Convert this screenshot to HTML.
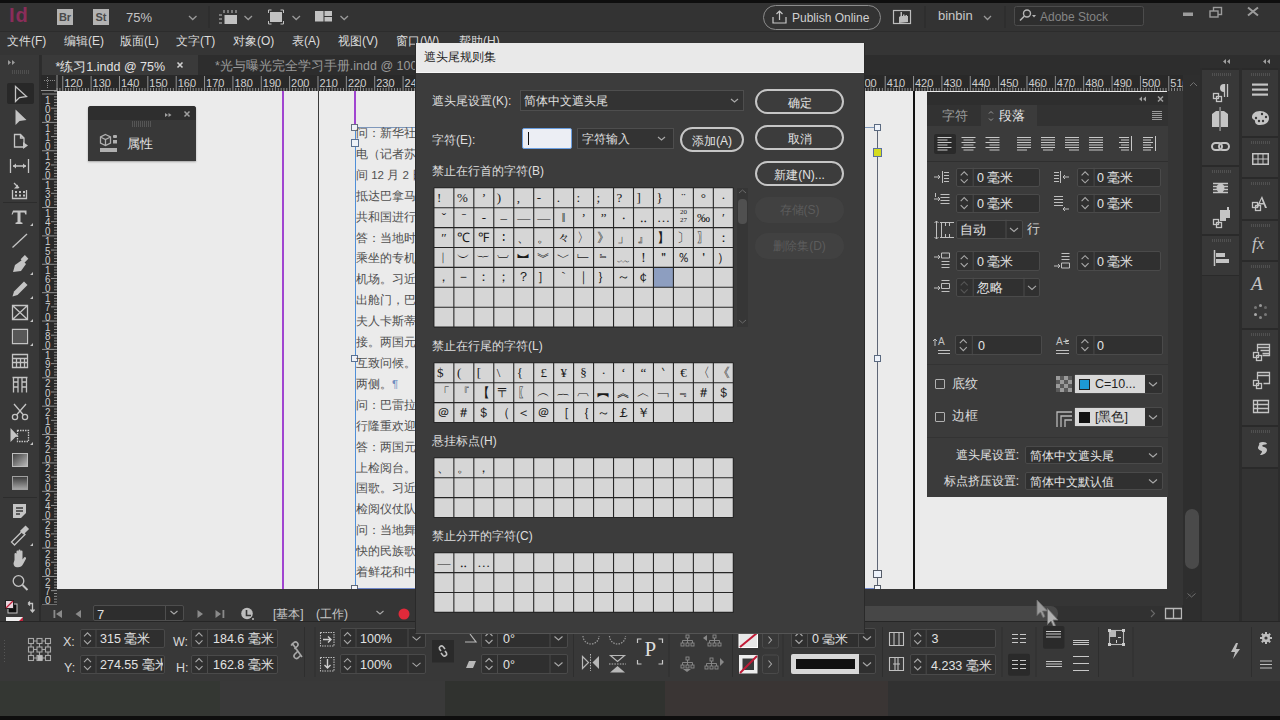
<!DOCTYPE html>
<html><head><meta charset="utf-8">
<style>
*{box-sizing:border-box;margin:0;padding:0}
body{text-spacing-trim:space-all;width:1280px;height:720px;overflow:hidden;position:relative;background:#363636;font-family:"Liberation Sans",sans-serif;font-size:12px;color:#d6d6d6}
.a{position:absolute}
.t{position:absolute;white-space:nowrap;line-height:1}
svg{position:absolute;overflow:visible}
</style></head><body>

<!-- top strip -->
<div class="a" style="left:0;top:0;width:1280px;height:3px;background:#0e0e0e"></div>
<!-- app bar -->
<div class="a" style="left:0;top:3px;width:1280px;height:28px;background:#333333"></div>
<!-- menu bar -->
<div class="a" style="left:0;top:31px;width:1280px;height:24px;background:#353535;border-top:1px solid #2c2c2c"></div>


<!-- APPBAR CONTENT -->
<div class="t" style="left:9px;top:5px;font-size:20px;font-weight:bold;color:#8a2d5a;letter-spacing:1px">Id</div>
<div class="a" style="left:57px;top:9px;width:16px;height:16px;background:#b3b3b3"></div>
<div class="t" style="left:57px;top:11.5px;font-size:11px;font-weight:bold;color:#4a4a4a;width:16px;text-align:center">Br</div>
<div class="a" style="left:93px;top:9px;width:16px;height:16px;background:#b3b3b3"></div>
<div class="t" style="left:93px;top:11.5px;font-size:11px;font-weight:bold;color:#4a4a4a;width:16px;text-align:center">St</div>
<div class="t" style="left:126px;top:11px;font-size:13px;color:#c4c4c4">75%</div>
<svg style="left:0;top:0" width="1280" height="32">
 <g fill="none" stroke="#9a9a9a" stroke-width="1.3">
  <path d="M189 16 L192.7 19.5 L196.5 16"/>
  <path d="M244.5 16 L248.2 19.5 L252 16"/>
  <path d="M292.5 16 L296.2 19.5 L300 16"/>
  <path d="M340.5 16 L344.2 19.5 L348 16"/>
  <path d="M984 16 L987.5 19.5 L991 16"/>
 </g>
 <line x1="209" y1="6" x2="209" y2="28" stroke="#2a2a2a" stroke-width="1"/>
 <line x1="925" y1="6" x2="925" y2="28" stroke="#2a2a2a" stroke-width="1"/>
 <line x1="1005" y1="6" x2="1005" y2="28" stroke="#2a2a2a" stroke-width="1"/>
 <!-- grid icon -->
 <rect x="224.5" y="15" width="12.5" height="9" fill="#c2c2c2"/>
 <g stroke="#c2c2c2" stroke-width="1">
  <path d="M224 10v3 M228 10v3 M232 10v3 M236 10v3 M219 15h3 M219 19h3 M219 23h3"/>
 </g>
 <!-- screen icon -->
 <rect x="270" y="12" width="12" height="10" fill="#c2c2c2"/>
 <path d="M268.5 13v-3h3 M280.5 10h3v3 M283.5 21v3h-3 M271.5 24h-3v-3" fill="none" stroke="#c2c2c2" stroke-width="1"/>
 <!-- arrange icon -->
 <rect x="315" y="11" width="8.5" height="10.5" fill="#c2c2c2"/>
 <rect x="324.5" y="11" width="7.5" height="5" fill="#c2c2c2"/>
 <rect x="324.5" y="17" width="7.5" height="4.5" fill="#c2c2c2"/>
 <!-- publish online -->
 <rect x="763.5" y="5.5" width="117" height="24" rx="12" fill="none" stroke="#8c8c8c" stroke-width="1"/>
 <path d="M773 17v6h13v-6" fill="none" stroke="#c8c8c8" stroke-width="1.2"/>
 <path d="M779.5 20v-9 M776.5 14l3-3 3 3" fill="none" stroke="#c8c8c8" stroke-width="1.2"/>
 <!-- hand icon -->
 <rect x="893.5" y="10.5" width="17" height="13" fill="none" stroke="#bdbdbd" stroke-width="1.2"/>
 <path d="M899 23v-6l1.5-1v-4h1.5v4h1v-1.5h1.5v1.5h1v-1h1.5v1h1v6z" fill="#bdbdbd"/>
 <!-- search -->
 <rect x="1014.5" y="6.5" width="129" height="19" rx="2" fill="#2e2e2e" stroke="#4c4c4c" stroke-width="1"/>
 <circle cx="1027" cy="13.5" r="3.5" fill="none" stroke="#b5b5b5" stroke-width="1.4"/>
 <path d="M1024.5 16 L1020 20.5" stroke="#b5b5b5" stroke-width="1.6"/>
 <path d="M1032 15h4l-2 2.5z" fill="#b5b5b5"/>
 <!-- window controls -->
 <rect x="1183" y="12.5" width="10" height="3.5" fill="#9c9c9c"/>
 <rect x="1213.5" y="7.5" width="8" height="7" fill="none" stroke="#9c9c9c" stroke-width="1.4"/>
 <rect x="1210" y="11" width="8" height="6" fill="#333" stroke="#9c9c9c" stroke-width="1.4"/>
 <path d="M1248 7.5 L1258 15.5 M1258 7.5 L1248 15.5" stroke="#9c9c9c" stroke-width="2"/>
</svg>
<div class="t" style="left:792px;top:12px;font-size:12px;color:#d0d0d0">Publish Online</div>
<div class="t" style="left:938px;top:9px;font-size:13px;color:#c8c8c8">binbin</div>
<div class="t" style="left:1040px;top:11px;font-size:12px;color:#858585">Adobe Stock</div>

<!-- MENU -->
<div class="t" style="left:7px;top:35px;font-size:12px;color:#dcdcdc">文件(F)</div>
<div class="t" style="left:64px;top:35px;font-size:12px;color:#dcdcdc">编辑(E)</div>
<div class="t" style="left:120px;top:35px;font-size:12px;color:#dcdcdc">版面(L)</div>
<div class="t" style="left:176px;top:35px;font-size:12px;color:#dcdcdc">文字(T)</div>
<div class="t" style="left:233px;top:35px;font-size:12px;color:#dcdcdc">对象(O)</div>
<div class="t" style="left:292px;top:35px;font-size:12px;color:#dcdcdc">表(A)</div>
<div class="t" style="left:338px;top:35px;font-size:12px;color:#dcdcdc">视图(V)</div>
<div class="t" style="left:396px;top:35px;font-size:12px;color:#dcdcdc">窗口(W)</div>
<div class="t" style="left:459px;top:35px;font-size:12px;color:#dcdcdc">帮助(H)</div>

<!-- tool panel -->
<div class="a" style="left:0;top:55px;width:41px;height:566px;background:#383838;border-right:1px solid #2a2a2a"></div>


<!-- TOOLS -->
<div class="a" style="left:3px;top:202px;width:34px;height:1px;background:#2c2c2c"></div>
<div class="a" style="left:3px;top:497px;width:34px;height:1px;background:#2c2c2c"></div>
<div class="a" style="left:39px;top:55px;width:2px;height:566px;background:#2c2c2c"></div>
<div class="a" style="left:7px;top:83px;width:27px;height:21px;background:#282828;border-radius:2px"></div>
<svg style="left:0;top:0" width="42" height="625">
 <path d="M8 60l3 2.5-3 2.5z M12 60l3 2.5-3 2.5z" fill="#9a9a9a"/>
 <g stroke="#4e4e4e" stroke-width="1"><path d="M12.5 70v4 M14.5 70v4 M16.5 70v4 M18.5 70v4 M20.5 70v4 M22.5 70v4 M24.5 70v4 M26.5 70v4 M28.5 70v4"/></g>
 <g fill="none" stroke="#c4c4c4" stroke-width="1.3" stroke-linejoin="miter">
  <path d="M15.5 86.5V101.5L19.5 97.5L26.5 96.5Z"/>
  <!-- page tool -->
  <path d="M14.5 134.5h6l3.5 3.5v9h-9.5z M20.5 134.5v3.5h3.5"/>
  <!-- gap -->
  <path d="M10.5 159v14 M28.5 159v14 M13 166h13"/>
  <!-- content collector -->
  <path d="M12.5 190v8.5h14v-8.5"/>
  <path d="M14 183l5 5"/>
  <!-- line -->
  <path d="M12.5 247.5L27 234"/>
  <!-- frame -->
  <path d="M12.5 305.5h15v14h-15z M12.5 305.5l15 14 M27.5 305.5l-15 14"/>
  <!-- rect -->
  <path d="M12.5 329.5h15v14h-15z"/>
  <!-- tables -->
  <path d="M12.5 354.5h15v13h-15z M12.5 358.5h15 M12.5 362.5h15 M16.5 358.5v9 M20.5 358.5v9 M24.5 358.5v9"/>
  <path d="M12.5 377.5h15 M13.5 377.5v15 M26.5 377.5v15 M18 377.5v15 M22 377.5v15 M13.5 382h4.5 M13.5 387h4.5 M22 382h4.5 M22 387h4.5"/>
  <!-- scissors -->
  <circle cx="15" cy="417" r="2.6"/><circle cx="25" cy="417" r="2.6"/>
  <path d="M16.5 415L26 404 M23.5 415L14 404"/>
  <!-- free transform -->
  <path d="M17.5 430.5h11v11h-11z" stroke-dasharray="1.5 1"/>
  <!-- note -->
  <!-- zoom -->
  <circle cx="18.5" cy="581" r="5.3"/>
  <path d="M22.5 585l5 5" stroke-width="2"/>
  <!-- swap -->
  <path d="M28 603.5h4.5v8 M30.5 609.5l2 2.5 2-2.5 M28 603.5l2-2 M28 603.5l2 2"/>
 </g>
 <g fill="#c4c4c4">
  <path d="M15.5 109.5V125L19.5 121L26.5 120Z"/>
  <path d="M23 142l5 3.5-5 3.5z"/>
  <path d="M13 166l3-2.5v5z M26 166l-3-2.5v5z"/>
  <rect x="15" y="191" width="2" height="2"/><rect x="19" y="191" width="2" height="2"/><rect x="23" y="191" width="2" height="2"/>
  <rect x="15" y="194.5" width="2" height="2"/><rect x="19" y="194.5" width="2" height="2"/><rect x="23" y="194.5" width="2" height="2"/>
  <path d="M18 184.5v4h-4z"/>
  <!-- T -->
  <path d="M13 210.5h13.5v4h-1.2l-.8-2h-4v9.5l2 .8v1.2h-7v-1.2l2-.8v-9.5h-4l-.8 2h-1.2z"/>
  <!-- pen -->
  <path d="M13 272l2-7 7-5 4 4-5 7z" />
  <rect x="22" y="256" width="5" height="6" transform="rotate(45 24.5 259)"/>
  <!-- pencil -->
  <path d="M12.5 296.5l1.5-5 10-10 3.5 3.5-10 10z"/>
  <!-- free transform arrow -->
  <path d="M10.5 428v14l5-5 3-.5z"/>
  <!-- note -->
  <path d="M13 504h13v9l-5 5h-8z"/>
  <!-- eyedropper -->
  <path d="M11.5 542l1.5-1.5 9-9 3 3-9 9-1.5 1.5z" fill="none" stroke="#c4c4c4" stroke-width="1.3"/>
  <rect x="22" y="526" width="5" height="8" transform="rotate(45 24.5 530)"/>
  <!-- hand -->
  <path d="M14.5 560v-6a1 1 0 0 1 2 0v4v-6.5a1 1 0 0 1 2 0v6v-7a1 1 0 0 1 2 0v7v-6a1 1 0 0 1 2 0v8l1.5-2a1.2 1.2 0 0 1 2 1.2l-3 5.5c-1 2-2.5 3-5 3h-1c-2 0-3.5-1.5-3.5-4z"/>
  <!-- small triangles -->
  <path d="M30 226h3v-3z M30 275h3v-3z M30 299h3v-3z M30 322h3v-3z M30 346h3v-3z M30 445h3v-3z M30 546h3v-3z"/>
  <!-- fill/stroke -->
  <rect x="8" y="604" width="9" height="9" fill="#111" stroke="#c4c4c4" stroke-width="1"/>
  <rect x="5.5" y="600.5" width="8" height="8" fill="#e8d4dc" stroke="#222" stroke-width="1"/>
  <path d="M6 608l7-7" stroke="#c0203a" stroke-width="1.2"/>
  <rect x="6" y="617" width="17" height="4" fill="#eee"/>
  <path d="M19 621l4-4v4z" fill="#c0203a"/>
 </g>
 <path d="M25.5 312.5" />
 <rect x="13" y="330" width="14" height="13" fill="#575757"/>
 <defs><linearGradient id="gr1" x1="0" y1="0" x2="1" y2="1"><stop offset="0" stop-color="#3c3c3c"/><stop offset="1" stop-color="#bdbdbd"/></linearGradient>
 <linearGradient id="gr2" x1="0" y1="0" x2="0" y2="1"><stop offset="0" stop-color="#3a3a3a"/><stop offset="1" stop-color="#a8a8a8"/></linearGradient></defs>
 <rect x="12.5" y="453.5" width="15" height="13" fill="url(#gr1)" stroke="#bdbdbd" stroke-width="1"/>
 <rect x="12.5" y="476.5" width="15" height="13" fill="url(#gr2)" stroke="#a0a0a0" stroke-width="1"/>
 <path d="M16 508h7 M16 511h7 M16 514h4" stroke="#383838" stroke-width="1.3"/>
 <path d="M15 212h4" />
</svg>

<!-- tab bar -->
<div class="a" style="left:41px;top:55px;width:1159px;height:20px;background:#2d2d2d"></div>
<div class="a" style="left:42px;top:55px;width:156px;height:20px;background:#3a3a3a"></div>


<div class="t" style="left:55.5px;top:60.5px;font-size:12.5px;color:#e4e4e4">*练习1.indd @ 75%</div>
<svg style="left:0;top:0" width="300" height="80"><path d="M177.5 62.5l5 5 M182.5 62.5l-5 5" stroke="#d0d0d0" stroke-width="1.6"/></svg>
<div class="t" style="left:215px;top:59.5px;font-size:12.5px;color:#9a9a9a">*光与曝光完全学习手册.indd @ 100%</div>

<!-- ruler -->
<div class="a" style="left:41px;top:75px;width:1143px;height:16px;background:#292929"></div>
<div class="a" style="left:41px;top:91px;width:16px;height:514px;background:#292929"></div>

<!-- pasteboard -->
<div class="a" style="left:57px;top:91px;width:1110px;height:498px;background:#ebebeb"></div>
<svg style="left:0;top:0" width="1280" height="720">
<g stroke="#a4a4a4" stroke-width="0.85">
<path d="M57.08 88V91 M59.91 88V91 M62.75 76V91 M65.59 88V91 M68.42 88V91 M71.26 88V91 M74.09 88V91 M76.93 85V91 M79.77 88V91 M82.60 88V91 M85.44 88V91 M88.27 88V91 M91.11 76V91 M93.95 88V91 M96.78 88V91 M99.62 88V91 M102.45 88V91 M105.29 85V91 M108.13 88V91 M110.96 88V91 M113.80 88V91 M116.63 88V91 M119.47 76V91 M122.31 88V91 M125.14 88V91 M127.98 88V91 M130.81 88V91 M133.65 85V91 M136.49 88V91 M139.32 88V91 M142.16 88V91 M144.99 88V91 M147.83 76V91 M150.67 88V91 M153.50 88V91 M156.34 88V91 M159.17 88V91 M162.01 85V91 M164.85 88V91 M167.68 88V91 M170.52 88V91 M173.35 88V91 M176.19 76V91 M179.03 88V91 M181.86 88V91 M184.70 88V91 M187.53 88V91 M190.37 85V91 M193.21 88V91 M196.04 88V91 M198.88 88V91 M201.71 88V91 M204.55 76V91 M207.39 88V91 M210.22 88V91 M213.06 88V91 M215.89 88V91 M218.73 85V91 M221.57 88V91 M224.40 88V91 M227.24 88V91 M230.07 88V91 M232.91 76V91 M235.75 88V91 M238.58 88V91 M241.42 88V91 M244.25 88V91 M247.09 85V91 M249.93 88V91 M252.76 88V91 M255.60 88V91 M258.43 88V91 M261.27 76V91 M264.11 88V91 M266.94 88V91 M269.78 88V91 M272.61 88V91 M275.45 85V91 M278.29 88V91 M281.12 88V91 M283.96 88V91 M286.79 88V91 M289.63 76V91 M292.47 88V91 M295.30 88V91 M298.14 88V91 M300.97 88V91 M303.81 85V91 M306.65 88V91 M309.48 88V91 M312.32 88V91 M315.15 88V91 M317.99 76V91 M320.83 88V91 M323.66 88V91 M326.50 88V91 M329.33 88V91 M332.17 85V91 M335.01 88V91 M337.84 88V91 M340.68 88V91 M343.51 88V91 M346.35 76V91 M349.19 88V91 M352.02 88V91 M354.86 88V91 M357.69 88V91 M360.53 85V91 M363.37 88V91 M366.20 88V91 M369.04 88V91 M371.87 88V91 M374.71 76V91 M377.55 88V91 M380.38 88V91 M383.22 88V91 M386.05 88V91 M388.89 85V91 M391.73 88V91 M394.56 88V91 M397.40 88V91 M400.23 88V91 M403.07 76V91 M405.91 88V91 M408.74 88V91 M411.58 88V91 M414.41 88V91 M417.25 85V91 M420.09 88V91 M422.92 88V91 M425.76 88V91 M428.59 88V91 M431.43 76V91 M434.27 88V91 M437.10 88V91 M439.94 88V91 M442.77 88V91 M445.61 85V91 M448.45 88V91 M451.28 88V91 M454.12 88V91 M456.95 88V91 M459.79 76V91 M462.63 88V91 M465.46 88V91 M468.30 88V91 M471.13 88V91 M473.97 85V91 M476.81 88V91 M479.64 88V91 M482.48 88V91 M485.31 88V91 M488.15 76V91 M490.99 88V91 M493.82 88V91 M496.66 88V91 M499.49 88V91 M502.33 85V91 M505.17 88V91 M508.00 88V91 M510.84 88V91 M513.67 88V91 M516.51 76V91 M519.35 88V91 M522.18 88V91 M525.02 88V91 M527.85 88V91 M530.69 85V91 M533.53 88V91 M536.36 88V91 M539.20 88V91 M542.03 88V91 M544.87 76V91 M547.71 88V91 M550.54 88V91 M553.38 88V91 M556.21 88V91 M559.05 85V91 M561.89 88V91 M564.72 88V91 M567.56 88V91 M570.39 88V91 M573.23 76V91 M576.07 88V91 M578.90 88V91 M581.74 88V91 M584.57 88V91 M587.41 85V91 M590.25 88V91 M593.08 88V91 M595.92 88V91 M598.75 88V91 M601.59 76V91 M604.43 88V91 M607.26 88V91 M610.10 88V91 M612.93 88V91 M615.77 85V91 M618.61 88V91 M621.44 88V91 M624.28 88V91 M627.11 88V91 M629.95 76V91 M632.79 88V91 M635.62 88V91 M638.46 88V91 M641.29 88V91 M644.13 85V91 M646.97 88V91 M649.80 88V91 M652.64 88V91 M655.47 88V91 M658.31 76V91 M661.15 88V91 M663.98 88V91 M666.82 88V91 M669.65 88V91 M672.49 85V91 M675.33 88V91 M678.16 88V91 M681.00 88V91 M683.83 88V91 M686.67 76V91 M689.51 88V91 M692.34 88V91 M695.18 88V91 M698.01 88V91 M700.85 85V91 M703.69 88V91 M706.52 88V91 M709.36 88V91 M712.19 88V91 M715.03 76V91 M717.87 88V91 M720.70 88V91 M723.54 88V91 M726.37 88V91 M729.21 85V91 M732.05 88V91 M734.88 88V91 M737.72 88V91 M740.55 88V91 M743.39 76V91 M746.23 88V91 M749.06 88V91 M751.90 88V91 M754.73 88V91 M757.57 85V91 M760.41 88V91 M763.24 88V91 M766.08 88V91 M768.91 88V91 M771.75 76V91 M774.59 88V91 M777.42 88V91 M780.26 88V91 M783.09 88V91 M785.93 85V91 M788.77 88V91 M791.60 88V91 M794.44 88V91 M797.27 88V91 M800.11 76V91 M802.95 88V91 M805.78 88V91 M808.62 88V91 M811.45 88V91 M814.29 85V91 M817.13 88V91 M819.96 88V91 M822.80 88V91 M825.63 88V91 M828.47 76V91 M831.31 88V91 M834.14 88V91 M836.98 88V91 M839.81 88V91 M842.65 85V91 M845.49 88V91 M848.32 88V91 M851.16 88V91 M853.99 88V91 M856.83 76V91 M859.67 88V91 M862.50 88V91 M865.34 88V91 M868.17 88V91 M871.01 85V91 M873.85 88V91 M876.68 88V91 M879.52 88V91 M882.35 88V91 M885.19 76V91 M888.03 88V91 M890.86 88V91 M893.70 88V91 M896.53 88V91 M899.37 85V91 M902.21 88V91 M905.04 88V91 M907.88 88V91 M910.71 88V91 M913.55 76V91 M916.39 88V91 M919.22 88V91 M922.06 88V91 M924.89 88V91 M927.73 85V91 M930.57 88V91 M933.40 88V91 M936.24 88V91 M939.07 88V91 M941.91 76V91 M944.75 88V91 M947.58 88V91 M950.42 88V91 M953.25 88V91 M956.09 85V91 M958.93 88V91 M961.76 88V91 M964.60 88V91 M967.43 88V91 M970.27 76V91 M973.11 88V91 M975.94 88V91 M978.78 88V91 M981.61 88V91 M984.45 85V91 M987.29 88V91 M990.12 88V91 M992.96 88V91 M995.79 88V91 M998.63 76V91 M1001.47 88V91 M1004.30 88V91 M1007.14 88V91 M1009.97 88V91 M1012.81 85V91 M1015.65 88V91 M1018.48 88V91 M1021.32 88V91 M1024.15 88V91 M1026.99 76V91 M1029.83 88V91 M1032.66 88V91 M1035.50 88V91 M1038.33 88V91 M1041.17 85V91 M1044.01 88V91 M1046.84 88V91 M1049.68 88V91 M1052.51 88V91 M1055.35 76V91 M1058.19 88V91 M1061.02 88V91 M1063.86 88V91 M1066.69 88V91 M1069.53 85V91 M1072.37 88V91 M1075.20 88V91 M1078.04 88V91 M1080.87 88V91 M1083.71 76V91 M1086.55 88V91 M1089.38 88V91 M1092.22 88V91 M1095.05 88V91 M1097.89 85V91 M1100.73 88V91 M1103.56 88V91 M1106.40 88V91 M1109.23 88V91 M1112.07 76V91 M1114.91 88V91 M1117.74 88V91 M1120.58 88V91 M1123.41 88V91 M1126.25 85V91 M1129.09 88V91 M1131.92 88V91 M1134.76 88V91 M1137.59 88V91 M1140.43 76V91 M1143.27 88V91 M1146.10 88V91 M1148.94 88V91 M1151.77 88V91 M1154.61 85V91 M1157.45 88V91 M1160.28 88V91 M1163.12 88V91 M1165.95 88V91 M1168.79 76V91 M1171.63 88V91 M1174.46 88V91 M1177.30 88V91 M1180.13 88V91 M1182.97 85V91"/>
<path d="M54 91.16H57 M42 94.00H57 M54 96.84H57 M54 99.68H57 M54 102.51H57 M54 105.35H57 M51 108.19H57 M54 111.03H57 M54 113.87H57 M54 116.70H57 M54 119.54H57 M42 122.38H57 M54 125.22H57 M54 128.06H57 M54 130.89H57 M54 133.73H57 M51 136.57H57 M54 139.41H57 M54 142.25H57 M54 145.08H57 M54 147.92H57 M42 150.76H57 M54 153.60H57 M54 156.44H57 M54 159.27H57 M54 162.11H57 M51 164.95H57 M54 167.79H57 M54 170.63H57 M54 173.46H57 M54 176.30H57 M42 179.14H57 M54 181.98H57 M54 184.82H57 M54 187.65H57 M54 190.49H57 M51 193.33H57 M54 196.17H57 M54 199.01H57 M54 201.84H57 M54 204.68H57 M42 207.52H57 M54 210.36H57 M54 213.20H57 M54 216.03H57 M54 218.87H57 M51 221.71H57 M54 224.55H57 M54 227.39H57 M54 230.22H57 M54 233.06H57 M42 235.90H57 M54 238.74H57 M54 241.58H57 M54 244.41H57 M54 247.25H57 M51 250.09H57 M54 252.93H57 M54 255.77H57 M54 258.60H57 M54 261.44H57 M42 264.28H57 M54 267.12H57 M54 269.96H57 M54 272.79H57 M54 275.63H57 M51 278.47H57 M54 281.31H57 M54 284.15H57 M54 286.98H57 M54 289.82H57 M42 292.66H57 M54 295.50H57 M54 298.34H57 M54 301.17H57 M54 304.01H57 M51 306.85H57 M54 309.69H57 M54 312.53H57 M54 315.36H57 M54 318.20H57 M42 321.04H57 M54 323.88H57 M54 326.72H57 M54 329.55H57 M54 332.39H57 M51 335.23H57 M54 338.07H57 M54 340.91H57 M54 343.74H57 M54 346.58H57 M42 349.42H57 M54 352.26H57 M54 355.10H57 M54 357.93H57 M54 360.77H57 M51 363.61H57 M54 366.45H57 M54 369.29H57 M54 372.12H57 M54 374.96H57 M42 377.80H57 M54 380.64H57 M54 383.48H57 M54 386.31H57 M54 389.15H57 M51 391.99H57 M54 394.83H57 M54 397.67H57 M54 400.50H57 M54 403.34H57 M42 406.18H57 M54 409.02H57 M54 411.86H57 M54 414.69H57 M54 417.53H57 M51 420.37H57 M54 423.21H57 M54 426.05H57 M54 428.88H57 M54 431.72H57 M42 434.56H57 M54 437.40H57 M54 440.24H57 M54 443.07H57 M54 445.91H57 M51 448.75H57 M54 451.59H57 M54 454.43H57 M54 457.26H57 M54 460.10H57 M42 462.94H57 M54 465.78H57 M54 468.62H57 M54 471.45H57 M54 474.29H57 M51 477.13H57 M54 479.97H57 M54 482.81H57 M54 485.64H57 M54 488.48H57 M42 491.32H57 M54 494.16H57 M54 497.00H57 M54 499.83H57 M54 502.67H57 M51 505.51H57 M54 508.35H57 M54 511.19H57 M54 514.02H57 M54 516.86H57 M42 519.70H57 M54 522.54H57 M54 525.38H57 M54 528.21H57 M54 531.05H57 M51 533.89H57 M54 536.73H57 M54 539.57H57 M54 542.40H57 M54 545.24H57 M42 548.08H57 M54 550.92H57 M54 553.76H57 M54 556.59H57 M54 559.43H57 M51 562.27H57 M54 565.11H57 M54 567.95H57 M54 570.78H57 M54 573.62H57 M42 576.46H57 M54 579.30H57 M54 582.14H57 M54 584.97H57 M54 587.81H57 M51 590.65H57 M54 593.49H57 M54 596.33H57 M54 599.16H57 M54 602.00H57 M42 604.84H57"/>
<path d="M57 75V91 M41 90.5H57"/>
</g>
<g fill="#8a8a8a">
<rect x="44" y="80" width="1" height="1"/>
<rect x="47" y="77" width="1" height="1"/>
<rect x="46" y="80" width="1" height="1"/>
<rect x="47" y="79" width="1" height="1"/>
<rect x="48" y="80" width="1" height="1"/>
<rect x="47" y="81" width="1" height="1"/>
<rect x="50" y="80" width="1" height="1"/>
<rect x="47" y="83" width="1" height="1"/>
<rect x="52" y="80" width="1" height="1"/>
<rect x="47" y="85" width="1" height="1"/>
<rect x="54" y="80" width="1" height="1"/>
<rect x="47" y="87" width="1" height="1"/>
</g>
</svg>
<div class="t" style="left:64.2px;top:78px;font-size:11px;color:#cfcfcf">120</div>
<div class="t" style="left:92.6px;top:78px;font-size:11px;color:#cfcfcf">130</div>
<div class="t" style="left:121.0px;top:78px;font-size:11px;color:#cfcfcf">140</div>
<div class="t" style="left:149.3px;top:78px;font-size:11px;color:#cfcfcf">150</div>
<div class="t" style="left:177.7px;top:78px;font-size:11px;color:#cfcfcf">160</div>
<div class="t" style="left:206.1px;top:78px;font-size:11px;color:#cfcfcf">170</div>
<div class="t" style="left:234.4px;top:78px;font-size:11px;color:#cfcfcf">180</div>
<div class="t" style="left:262.8px;top:78px;font-size:11px;color:#cfcfcf">190</div>
<div class="t" style="left:291.1px;top:78px;font-size:11px;color:#cfcfcf">200</div>
<div class="t" style="left:319.5px;top:78px;font-size:11px;color:#cfcfcf">210</div>
<div class="t" style="left:347.9px;top:78px;font-size:11px;color:#cfcfcf">220</div>
<div class="t" style="left:376.2px;top:78px;font-size:11px;color:#cfcfcf">230</div>
<div class="t" style="left:404.6px;top:78px;font-size:11px;color:#cfcfcf">240</div>
<div class="t" style="left:432.9px;top:78px;font-size:11px;color:#cfcfcf">250</div>
<div class="t" style="left:461.3px;top:78px;font-size:11px;color:#cfcfcf">260</div>
<div class="t" style="left:489.6px;top:78px;font-size:11px;color:#cfcfcf">270</div>
<div class="t" style="left:518.0px;top:78px;font-size:11px;color:#cfcfcf">280</div>
<div class="t" style="left:546.4px;top:78px;font-size:11px;color:#cfcfcf">290</div>
<div class="t" style="left:574.7px;top:78px;font-size:11px;color:#cfcfcf">300</div>
<div class="t" style="left:603.1px;top:78px;font-size:11px;color:#cfcfcf">310</div>
<div class="t" style="left:631.5px;top:78px;font-size:11px;color:#cfcfcf">320</div>
<div class="t" style="left:659.8px;top:78px;font-size:11px;color:#cfcfcf">330</div>
<div class="t" style="left:688.2px;top:78px;font-size:11px;color:#cfcfcf">340</div>
<div class="t" style="left:716.5px;top:78px;font-size:11px;color:#cfcfcf">350</div>
<div class="t" style="left:744.9px;top:78px;font-size:11px;color:#cfcfcf">360</div>
<div class="t" style="left:773.2px;top:78px;font-size:11px;color:#cfcfcf">370</div>
<div class="t" style="left:801.6px;top:78px;font-size:11px;color:#cfcfcf">380</div>
<div class="t" style="left:830.0px;top:78px;font-size:11px;color:#cfcfcf">390</div>
<div class="t" style="left:858.3px;top:78px;font-size:11px;color:#cfcfcf">400</div>
<div class="t" style="left:886.7px;top:78px;font-size:11px;color:#cfcfcf">410</div>
<div class="t" style="left:915.0px;top:78px;font-size:11px;color:#cfcfcf">420</div>
<div class="t" style="left:943.4px;top:78px;font-size:11px;color:#cfcfcf">430</div>
<div class="t" style="left:971.8px;top:78px;font-size:11px;color:#cfcfcf">440</div>
<div class="t" style="left:1000.1px;top:78px;font-size:11px;color:#cfcfcf">450</div>
<div class="t" style="left:1028.5px;top:78px;font-size:11px;color:#cfcfcf">460</div>
<div class="t" style="left:1056.8px;top:78px;font-size:11px;color:#cfcfcf">470</div>
<div class="t" style="left:1085.2px;top:78px;font-size:11px;color:#cfcfcf">480</div>
<div class="t" style="left:1113.6px;top:78px;font-size:11px;color:#cfcfcf">490</div>
<div class="t" style="left:1141.9px;top:78px;font-size:11px;color:#cfcfcf">500</div>
<div class="t" style="left:1170.3px;top:78px;font-size:11px;color:#cfcfcf">510</div>
<div class="t" style="left:44.5px;top:95.5px;font-size:11.5px;color:#cfcfcf;line-height:9px;transform:scaleX(.85);transform-origin:0 0">1</div>
<div class="t" style="left:44.5px;top:104.7px;font-size:11.5px;color:#cfcfcf;line-height:9px;transform:scaleX(.85);transform-origin:0 0">0</div>
<div class="t" style="left:44.5px;top:113.9px;font-size:11.5px;color:#cfcfcf;line-height:9px;transform:scaleX(.85);transform-origin:0 0">0</div>
<div class="t" style="left:44.5px;top:123.9px;font-size:11.5px;color:#cfcfcf;line-height:9px;transform:scaleX(.85);transform-origin:0 0">1</div>
<div class="t" style="left:44.5px;top:133.1px;font-size:11.5px;color:#cfcfcf;line-height:9px;transform:scaleX(.85);transform-origin:0 0">1</div>
<div class="t" style="left:44.5px;top:142.3px;font-size:11.5px;color:#cfcfcf;line-height:9px;transform:scaleX(.85);transform-origin:0 0">0</div>
<div class="t" style="left:44.5px;top:152.3px;font-size:11.5px;color:#cfcfcf;line-height:9px;transform:scaleX(.85);transform-origin:0 0">1</div>
<div class="t" style="left:44.5px;top:161.5px;font-size:11.5px;color:#cfcfcf;line-height:9px;transform:scaleX(.85);transform-origin:0 0">2</div>
<div class="t" style="left:44.5px;top:170.7px;font-size:11.5px;color:#cfcfcf;line-height:9px;transform:scaleX(.85);transform-origin:0 0">0</div>
<div class="t" style="left:44.5px;top:180.6px;font-size:11.5px;color:#cfcfcf;line-height:9px;transform:scaleX(.85);transform-origin:0 0">1</div>
<div class="t" style="left:44.5px;top:189.8px;font-size:11.5px;color:#cfcfcf;line-height:9px;transform:scaleX(.85);transform-origin:0 0">3</div>
<div class="t" style="left:44.5px;top:199.0px;font-size:11.5px;color:#cfcfcf;line-height:9px;transform:scaleX(.85);transform-origin:0 0">0</div>
<div class="t" style="left:44.5px;top:209.0px;font-size:11.5px;color:#cfcfcf;line-height:9px;transform:scaleX(.85);transform-origin:0 0">1</div>
<div class="t" style="left:44.5px;top:218.2px;font-size:11.5px;color:#cfcfcf;line-height:9px;transform:scaleX(.85);transform-origin:0 0">4</div>
<div class="t" style="left:44.5px;top:227.4px;font-size:11.5px;color:#cfcfcf;line-height:9px;transform:scaleX(.85);transform-origin:0 0">0</div>
<div class="t" style="left:44.5px;top:237.4px;font-size:11.5px;color:#cfcfcf;line-height:9px;transform:scaleX(.85);transform-origin:0 0">1</div>
<div class="t" style="left:44.5px;top:246.6px;font-size:11.5px;color:#cfcfcf;line-height:9px;transform:scaleX(.85);transform-origin:0 0">5</div>
<div class="t" style="left:44.5px;top:255.8px;font-size:11.5px;color:#cfcfcf;line-height:9px;transform:scaleX(.85);transform-origin:0 0">0</div>
<div class="t" style="left:44.5px;top:265.8px;font-size:11.5px;color:#cfcfcf;line-height:9px;transform:scaleX(.85);transform-origin:0 0">1</div>
<div class="t" style="left:44.5px;top:275.0px;font-size:11.5px;color:#cfcfcf;line-height:9px;transform:scaleX(.85);transform-origin:0 0">6</div>
<div class="t" style="left:44.5px;top:284.2px;font-size:11.5px;color:#cfcfcf;line-height:9px;transform:scaleX(.85);transform-origin:0 0">0</div>
<div class="t" style="left:44.5px;top:294.2px;font-size:11.5px;color:#cfcfcf;line-height:9px;transform:scaleX(.85);transform-origin:0 0">1</div>
<div class="t" style="left:44.5px;top:303.4px;font-size:11.5px;color:#cfcfcf;line-height:9px;transform:scaleX(.85);transform-origin:0 0">7</div>
<div class="t" style="left:44.5px;top:312.6px;font-size:11.5px;color:#cfcfcf;line-height:9px;transform:scaleX(.85);transform-origin:0 0">0</div>
<div class="t" style="left:44.5px;top:322.5px;font-size:11.5px;color:#cfcfcf;line-height:9px;transform:scaleX(.85);transform-origin:0 0">1</div>
<div class="t" style="left:44.5px;top:331.7px;font-size:11.5px;color:#cfcfcf;line-height:9px;transform:scaleX(.85);transform-origin:0 0">8</div>
<div class="t" style="left:44.5px;top:340.9px;font-size:11.5px;color:#cfcfcf;line-height:9px;transform:scaleX(.85);transform-origin:0 0">0</div>
<div class="t" style="left:44.5px;top:350.9px;font-size:11.5px;color:#cfcfcf;line-height:9px;transform:scaleX(.85);transform-origin:0 0">1</div>
<div class="t" style="left:44.5px;top:360.1px;font-size:11.5px;color:#cfcfcf;line-height:9px;transform:scaleX(.85);transform-origin:0 0">9</div>
<div class="t" style="left:44.5px;top:369.3px;font-size:11.5px;color:#cfcfcf;line-height:9px;transform:scaleX(.85);transform-origin:0 0">0</div>
<div class="t" style="left:44.5px;top:379.3px;font-size:11.5px;color:#cfcfcf;line-height:9px;transform:scaleX(.85);transform-origin:0 0">2</div>
<div class="t" style="left:44.5px;top:388.5px;font-size:11.5px;color:#cfcfcf;line-height:9px;transform:scaleX(.85);transform-origin:0 0">0</div>
<div class="t" style="left:44.5px;top:397.7px;font-size:11.5px;color:#cfcfcf;line-height:9px;transform:scaleX(.85);transform-origin:0 0">0</div>
<div class="t" style="left:44.5px;top:407.7px;font-size:11.5px;color:#cfcfcf;line-height:9px;transform:scaleX(.85);transform-origin:0 0">2</div>
<div class="t" style="left:44.5px;top:416.9px;font-size:11.5px;color:#cfcfcf;line-height:9px;transform:scaleX(.85);transform-origin:0 0">1</div>
<div class="t" style="left:44.5px;top:426.1px;font-size:11.5px;color:#cfcfcf;line-height:9px;transform:scaleX(.85);transform-origin:0 0">0</div>
<div class="t" style="left:44.5px;top:436.1px;font-size:11.5px;color:#cfcfcf;line-height:9px;transform:scaleX(.85);transform-origin:0 0">2</div>
<div class="t" style="left:44.5px;top:445.3px;font-size:11.5px;color:#cfcfcf;line-height:9px;transform:scaleX(.85);transform-origin:0 0">2</div>
<div class="t" style="left:44.5px;top:454.5px;font-size:11.5px;color:#cfcfcf;line-height:9px;transform:scaleX(.85);transform-origin:0 0">0</div>
<div class="t" style="left:44.5px;top:464.4px;font-size:11.5px;color:#cfcfcf;line-height:9px;transform:scaleX(.85);transform-origin:0 0">2</div>
<div class="t" style="left:44.5px;top:473.6px;font-size:11.5px;color:#cfcfcf;line-height:9px;transform:scaleX(.85);transform-origin:0 0">3</div>
<div class="t" style="left:44.5px;top:482.8px;font-size:11.5px;color:#cfcfcf;line-height:9px;transform:scaleX(.85);transform-origin:0 0">0</div>
<div class="t" style="left:44.5px;top:492.8px;font-size:11.5px;color:#cfcfcf;line-height:9px;transform:scaleX(.85);transform-origin:0 0">2</div>
<div class="t" style="left:44.5px;top:502.0px;font-size:11.5px;color:#cfcfcf;line-height:9px;transform:scaleX(.85);transform-origin:0 0">4</div>
<div class="t" style="left:44.5px;top:511.2px;font-size:11.5px;color:#cfcfcf;line-height:9px;transform:scaleX(.85);transform-origin:0 0">0</div>
<div class="t" style="left:44.5px;top:521.2px;font-size:11.5px;color:#cfcfcf;line-height:9px;transform:scaleX(.85);transform-origin:0 0">2</div>
<div class="t" style="left:44.5px;top:530.4px;font-size:11.5px;color:#cfcfcf;line-height:9px;transform:scaleX(.85);transform-origin:0 0">5</div>
<div class="t" style="left:44.5px;top:539.6px;font-size:11.5px;color:#cfcfcf;line-height:9px;transform:scaleX(.85);transform-origin:0 0">0</div>
<div class="t" style="left:44.5px;top:549.6px;font-size:11.5px;color:#cfcfcf;line-height:9px;transform:scaleX(.85);transform-origin:0 0">2</div>
<div class="t" style="left:44.5px;top:558.8px;font-size:11.5px;color:#cfcfcf;line-height:9px;transform:scaleX(.85);transform-origin:0 0">6</div>
<div class="t" style="left:44.5px;top:568.0px;font-size:11.5px;color:#cfcfcf;line-height:9px;transform:scaleX(.85);transform-origin:0 0">0</div>
<div class="t" style="left:44.5px;top:578.0px;font-size:11.5px;color:#cfcfcf;line-height:9px;transform:scaleX(.85);transform-origin:0 0">2</div>
<div class="t" style="left:44.5px;top:587.2px;font-size:11.5px;color:#cfcfcf;line-height:9px;transform:scaleX(.85);transform-origin:0 0">7</div>
<div class="t" style="left:44.5px;top:596.4px;font-size:11.5px;color:#cfcfcf;line-height:9px;transform:scaleX(.85);transform-origin:0 0">0</div>
<!-- document content -->
<div class="a" style="left:282px;top:91px;width:1.6px;height:498px;background:#a044d0"></div>
<div class="a" style="left:318px;top:91px;width:1px;height:498px;background:#3a3a3a"></div>
<div class="a" style="left:354px;top:91px;width:1.6px;height:36px;background:#a044d0"></div>
<div class="a" style="left:913px;top:91px;width:2px;height:498px;background:#111"></div>
<div class="a" style="left:354.5px;top:127px;width:1.5px;height:462px;background:#4f8fd8"></div>
<div class="a" style="left:355px;top:127px;width:522px;height:1px;background:#7f98bb"></div>
<div class="a" style="left:877px;top:127px;width:1.2px;height:462px;background:#5e6676"></div>
<div class="a" style="left:355px;top:587.5px;width:522px;height:1.5px;background:#6f86c8"></div>
<div class="a" style="left:351px;top:123.5px;width:7px;height:7px;background:#eef2f8;border:1px solid #667080"></div>
<div class="a" style="left:351px;top:138.5px;width:8px;height:8px;background:#eef2f8;border:1px solid #5a7090"></div>
<div class="a" style="left:351px;top:354.5px;width:7px;height:7px;background:#eef2f8;border:1px solid #5a7090"></div>
<div class="a" style="left:351px;top:585px;width:7px;height:7px;background:#f4f6fa;border:1px solid #606876"></div>
<div class="a" style="left:873.5px;top:123.5px;width:7px;height:7px;background:#eef3fb;border:1px solid #5b6a80"></div>
<div class="a" style="left:873px;top:148px;width:8.5px;height:8.5px;background:#d4dc1e;border:1px solid #5b70a0"></div>
<div class="a" style="left:873.5px;top:354.5px;width:7px;height:7px;background:#eef3fb;border:1px solid #5b6a80"></div>
<div class="a" style="left:873px;top:569.5px;width:8.5px;height:8.5px;background:#eef3fb;border:1px solid #555c68"></div>
<div class="a" style="left:874px;top:585px;width:7px;height:7px;background:#f4f6fa;border:1px solid #555c68"></div>
<div class="a" style="left:356px;top:123px;width:60px;height:466px;overflow:hidden;font-size:11.5px;line-height:20.9px;color:#505050;white-space:nowrap">
问：新华社<br>电（记者苏<br>间 12 月 2 日<br>抵达巴拿马<br>共和国进行<br>答：当地时<br>乘坐的专机<br>机场。习近<br>出舱门，巴<br>夫人卡斯蒂<br>接。两国元<br>互致问候。<br>两侧。<span style="color:#6f8fc0">¶</span><br>问：巴雷拉<br>行隆重欢迎<br>答：两国元<br>上检阅台。<br>国歌。习近<br>检阅仪仗队<br>问：当地舞<br>快的民族歌<br>着鲜花和中
</div>

<!-- properties mini panel -->
<div class="a" style="left:88px;top:106px;width:108px;height:55px;background:#383838;border-radius:3px 3px 0 0;box-shadow:0 1px 2px rgba(0,0,0,.3)"></div>
<div class="a" style="left:88px;top:106px;width:108px;height:14px;background:#2e2e2e;border-radius:3px 3px 0 0"></div>
<svg style="left:0;top:0" width="400" height="200">
 <path d="M165 113l3 2-3 2z M168.5 113l3 2-3 2z" fill="#a0a0a0"/>
 <path d="M184.5 111.5l5 5 M189.5 111.5l-5 5" stroke="#a0a0a0" stroke-width="1.5"/>
 <g stroke="#555" stroke-width="1"><path d="M132.5 121v6 M134.5 121v6 M136.5 121v6 M138.5 121v6 M140.5 121v6 M142.5 121v6 M144.5 121v6 M146.5 121v6 M148.5 121v6 M150.5 121v6"/></g>
 <path d="M105.5 134.5l5 2.5v6l-5 2.5-5-2.5v-6z M100.5 137l5 2.5 5-2.5 M105.5 139.5v6" fill="none" stroke="#b0b0b0" stroke-width="1.3"/>
 <rect x="113" y="135" width="4" height="3" rx="1" fill="#b0b0b0"/>
 <rect x="113" y="140" width="4" height="3.5" fill="#b0b0b0"/>
 <rect x="100" y="148" width="17" height="4" fill="#b0b0b0"/>
</svg>
<div class="t" style="left:127px;top:137px;font-size:13px;color:#e2e2e2">属性</div>

<!-- right gap + scroll column -->
<div class="a" style="left:1167px;top:91px;width:16px;height:514px;background:#353535"></div>
<div class="a" style="left:1183px;top:75px;width:17px;height:546px;background:#2e2e2e"></div>
<div class="a" style="left:1185px;top:509px;width:14px;height:60px;background:#4a4a4a;border-radius:7px"></div>

<!-- status bar -->
<div class="a" style="left:57px;top:589px;width:1126px;height:16px;background:#353535"></div>
<div class="a" style="left:41px;top:605px;width:1142px;height:16px;background:#353535"></div>

<!-- right dock -->
<div class="a" style="left:1200px;top:55px;width:80px;height:566px;background:#383838"></div>

<!-- RIGHT DOCK -->
<div class="a" style="left:1200px;top:55px;width:80px;height:13px;background:#2e2e2e"></div>
<div class="a" style="left:1200px;top:68px;width:2px;height:553px;background:#2c2c2c"></div>
<div class="a" style="left:1239px;top:68px;width:3px;height:553px;background:#2c2c2c"></div>
<div class="a" style="left:1278px;top:68px;width:2px;height:553px;background:#2c2c2c"></div>
<svg style="left:0;top:0" width="1280" height="720">
<path d="M1230 59l-3 2.5 3 2.5z M1226 59l-3 2.5 3 2.5z M1270 59l-3 2.5 3 2.5z M1266 59l-3 2.5 3 2.5z" fill="#a0a0a0"/>
<rect x="1202" y="68" width="37" height="2" fill="#2a2a2a"/>
<rect x="1202" y="165" width="37" height="2" fill="#2a2a2a"/>
<rect x="1202" y="234" width="37" height="2" fill="#2a2a2a"/>
<rect x="1202" y="275" width="37" height="2" fill="#2a2a2a"/>
<rect x="1242" y="68" width="36" height="2" fill="#2a2a2a"/>
<rect x="1242" y="136" width="36" height="2" fill="#2a2a2a"/>
<rect x="1242" y="177" width="36" height="2" fill="#2a2a2a"/>
<rect x="1242" y="219" width="36" height="2" fill="#2a2a2a"/>
<rect x="1242" y="260" width="36" height="2" fill="#2a2a2a"/>
<rect x="1242" y="328" width="36" height="2" fill="#2a2a2a"/>
<rect x="1242" y="425" width="36" height="2" fill="#2a2a2a"/>
<rect x="1242" y="467" width="36" height="2" fill="#2a2a2a"/>
<path d="M1212.5 73v3 M1214.5 73v3 M1216.5 73v3 M1218.5 73v3 M1220.5 73v3 M1222.5 73v3 M1224.5 73v3 M1226.5 73v3 M1228.5 73v3 M1230.5 73v3 M1212.5 170v3 M1214.5 170v3 M1216.5 170v3 M1218.5 170v3 M1220.5 170v3 M1222.5 170v3 M1224.5 170v3 M1226.5 170v3 M1228.5 170v3 M1230.5 170v3 M1212.5 239v3 M1214.5 239v3 M1216.5 239v3 M1218.5 239v3 M1220.5 239v3 M1222.5 239v3 M1224.5 239v3 M1226.5 239v3 M1228.5 239v3 M1230.5 239v3 M1251.5 73v3 M1253.5 73v3 M1255.5 73v3 M1257.5 73v3 M1259.5 73v3 M1261.5 73v3 M1263.5 73v3 M1265.5 73v3 M1267.5 73v3 M1269.5 73v3 M1251.5 141v3 M1253.5 141v3 M1255.5 141v3 M1257.5 141v3 M1259.5 141v3 M1261.5 141v3 M1263.5 141v3 M1265.5 141v3 M1267.5 141v3 M1269.5 141v3 M1251.5 182v3 M1253.5 182v3 M1255.5 182v3 M1257.5 182v3 M1259.5 182v3 M1261.5 182v3 M1263.5 182v3 M1265.5 182v3 M1267.5 182v3 M1269.5 182v3 M1251.5 224v3 M1253.5 224v3 M1255.5 224v3 M1257.5 224v3 M1259.5 224v3 M1261.5 224v3 M1263.5 224v3 M1265.5 224v3 M1267.5 224v3 M1269.5 224v3 M1251.5 265v3 M1253.5 265v3 M1255.5 265v3 M1257.5 265v3 M1259.5 265v3 M1261.5 265v3 M1263.5 265v3 M1265.5 265v3 M1267.5 265v3 M1269.5 265v3 M1251.5 333v3 M1253.5 333v3 M1255.5 333v3 M1257.5 333v3 M1259.5 333v3 M1261.5 333v3 M1263.5 333v3 M1265.5 333v3 M1267.5 333v3 M1269.5 333v3 M1251.5 430v3 M1253.5 430v3 M1255.5 430v3 M1257.5 430v3 M1259.5 430v3 M1261.5 430v3 M1263.5 430v3 M1265.5 430v3 M1267.5 430v3 M1269.5 430v3" stroke="#505050" stroke-width="1"/>
<rect x="1202" y="276" width="37" height="345" fill="#333"/>
<rect x="1242" y="469" width="36" height="152" fill="#333"/>
<g fill="none" stroke="#c4c4c4" stroke-width="1.3">
<rect x="1213.5" y="93.5" width="5" height="5"/><rect x="1216.5" y="96.5" width="5" height="5"/>
<path d="M1227.5 84v13 M1224.5 84v13"/>

<rect x="1212" y="143" width="10" height="7" rx="3.5" stroke-width="2"/><rect x="1219" y="143" width="10" height="7" rx="3.5" stroke-width="2"/>
<path d="M1213 183.5h15 M1213 186.5h15 M1213 189.5h15 M1213 192.5h15"/>
<rect x="1213.5" y="219.5" width="5" height="5"/><rect x="1216.5" y="222.5" width="5" height="5"/>
<path d="M1214.5 250v16" stroke-width="1.5"/>
</g>
<g fill="#c4c4c4">
<path d="M1224 84a4 4 0 0 0 0 8z"/>
<path d="M1212 114l4-3h3v16h-7z M1228 114l-4-3h-3v16h7z"/><rect x="1219.6" y="107" width="0.9" height="24"/>
<ellipse cx="1220.5" cy="188" rx="4" ry="4.5"/>
<path d="M1220 210h7v-3h2v3h1v8h-4v3h-6z"/>
<rect x="1216" y="253" width="9" height="4"/><rect x="1216" y="259" width="13" height="4"/>
<rect x="1252" y="83.5" width="16" height="2.2"/><rect x="1252" y="88.5" width="16" height="2.2"/><rect x="1252" y="93.5" width="16" height="2.2"/>
<path d="M1260 111c-5 0-8 3-8 6 0 3 3 2 3 4 0 2 1 4 5 4 6 0 9-3 9-7 0-4-4-7-9-7z"/>
<rect x="1252" y="153" width="17" height="12" fill="#c4c4c4"/>
</g>
<g fill="#383838"><rect x="1253.5" y="154.5" width="4" height="4"/><rect x="1258.5" y="154.5" width="4" height="4"/><rect x="1263.5" y="154.5" width="4" height="4"/><rect x="1253.5" y="159.5" width="4" height="4"/><rect x="1258.5" y="159.5" width="4" height="4"/><rect x="1263.5" y="159.5" width="4" height="4"/><circle cx="1256" cy="118" r="1.2"/><circle cx="1259" cy="121" r="1.2"/><circle cx="1263" cy="121" r="1.2"/><circle cx="1266" cy="117" r="1.2"/><circle cx="1262" cy="114" r="1.2"/></g>
<g fill="none" stroke="#c4c4c4" stroke-width="1.3">
<rect x="1252.5" y="202.5" width="5" height="5"/><rect x="1255.5" y="205.5" width="5" height="5"/>
<rect x="1253.5" y="352.5" width="5" height="5"/><rect x="1256.5" y="355.5" width="5" height="5"/>
<path d="M1257.5 351.5v-7h12v11h-7 M1257.5 347.5h12 M1260.5 350.5h9 M1262.5 353.5h7"/>
<rect x="1253.5" y="380.5" width="5" height="5"/><rect x="1256.5" y="383.5" width="5" height="5"/>
<path d="M1257.5 379.5v-7h12v11h-6 M1257.5 375.5h12"/>
<path d="M1253.5 400.5h15v12h-15z M1253.5 404.5h15 M1253.5 408.5h15 M1257.5 400.5v12"/>
</g>
<g fill="#c4c4c4">
<path d="M1262 196l5 12h-2l-1.3-3.5h-4.4l-1.3 3.5h-2z M1260 203h3l-1.5-4z"/>
<rect x="1254" y="306" width="3" height="3" rx="1.5" fill="#777"/><rect x="1259" y="304" width="3" height="3" rx="1.5" fill="#999"/><rect x="1264" y="306" width="3" height="3" rx="1.5" fill="#666"/><rect x="1254" y="313" width="3" height="3" rx="1.5" fill="#aaa"/><rect x="1259" y="316" width="3" height="3" rx="1.5" fill="#888"/><rect x="1264" y="313" width="3" height="3" rx="1.5" fill="#777"/>
<path d="M1259 443c3-2 8-1 8 1-2 1-4 0-5 2 1 1 5 1 5 4 0 3-4 5-7 5l2-3c1-1-4-2-4-4s2-3 1-5z"/>
</g>
</svg>
<div class="t" style="left:1252px;top:235px;font-family:'Liberation Serif',serif;font-style:italic;font-size:17px;color:#c4c4c4">fx</div>
<div class="t" style="left:1251px;top:274px;font-family:'Liberation Serif',serif;font-style:italic;font-size:19px;color:#c4c4c4">A</div>
<!-- control panel -->
<div class="a" style="left:0;top:621px;width:1280px;height:60px;background:#383838;border-top:1px solid #262626"></div>

<!-- bottom -->
<div class="a" style="left:0;top:681px;width:1280px;height:35px;background:#343733"></div>
<div class="a" style="left:0;top:716px;width:1280px;height:4px;background:#0e0e0e"></div>

<!-- STATUS BAR -->
<div class="a" style="left:93px;top:605px;width:91px;height:15.5px;background:#2d2d2d;border:1px solid #4e4e4e;border-radius:2px"></div>
<div class="t" style="left:97px;top:607.5px;font-size:13px;color:#e0e0e0">7</div>
<div class="t" style="left:273px;top:608px;font-size:12px;color:#c8c8c8">[基本]</div>
<div class="t" style="left:316px;top:608px;font-size:12px;color:#c8c8c8">(工作)</div>
<svg style="left:0;top:0" width="1280" height="720">
<path d="M165.5 605v15.5" stroke="#4e4e4e"/>
<path d="M170.5 611l3.5 3 3.5-3 M376.5 611l3.5 3 3.5-3" fill="none" stroke="#a8a8a8" stroke-width="1.1"/>
<g fill="#8a8a8a"><rect x="53.5" y="610" width="1.8" height="8"/><path d="M62 610v8l-6-4z M81 610v8l-5.5-4z M197.5 610v8l5.5-4z M215.5 610v8l5.5-4z"/><rect x="222.5" y="610" width="1.8" height="8"/></g>
<circle cx="247" cy="613.5" r="5.8" fill="#bdbdbd"/><path d="M246.5 610v5.5h4.5" fill="none" stroke="#353535" stroke-width="1.6"/><path d="M250 619.5h3" stroke="#353535" stroke-width="2"/><circle cx="253" cy="619" r="1" fill="#bdbdbd"/>
<circle cx="404" cy="614" r="5.5" fill="#e02a3a"/>
<rect x="865" y="606" width="300" height="15" fill="#313131"/>
<rect x="855" y="606" width="203" height="15" rx="7" fill="#474747"/>
<path d="M1151 610l3.5 3.5-3.5 3.5" fill="none" stroke="#6a6a6a" stroke-width="1.1"/>
<path d="M1165.5 608.5h16v10h-16z M1173.5 608.5v10" fill="none" stroke="#b8b8b8" stroke-width="1.3"/>
<path d="M1186 599l8 -8" stroke="#3a3a3a"/>
<path d="M1183 605v16" stroke="#2a2a2a"/>
<path d="M1187.5 593.5l4 3.5 4-3.5" fill="none" stroke="#707070" stroke-width="1"/>
<path d="M1190 86l3.5-3.5 3.5 3.5" fill="none" stroke="#707070" stroke-width="1"/>
<path d="M1037 600v15.5l3.5-3.5 2.5 5.5 2-1-2.5-5.5h5z" fill="#9a9a9a" stroke="#6e6e6e" stroke-width=".8"/>
<path d="M1047.5 608.5v16l3.5-3.5 2.5 5.5 2-1-2.5-5.5h5z" fill="#b0b0b0" stroke="#707070" stroke-width=".8"/>
</svg>
<!-- CONTROL PANEL CONTENT -->
<div class="a" style="left:79.5px;top:628.8px;width:85.0px;height:19.2px;background:#2f2f2f;border:1px solid #4a4a4a;border-radius:2px"></div>
<svg style="left:0;top:0" width="1280" height="720"><path d="M96.0 628.8v19.2" stroke="#4a4a4a"/><path d="M84.0 636.4l3.5-3.5 3.5 3.5 M84.0 640.4l3.5 3.5 3.5-3.5" fill="none" stroke="#a8a8a8" stroke-width="1.1"/></svg>
<div class="t" style="left:100.0px;top:633.4px;font-size:12.5px;color:#e2e2e2">315 毫米</div>
<div class="a" style="left:79.5px;top:654.5px;width:85.0px;height:19.2px;background:#2f2f2f;border:1px solid #4a4a4a;border-radius:2px"></div>
<svg style="left:0;top:0" width="1280" height="720"><path d="M96.0 654.5v19.2" stroke="#4a4a4a"/><path d="M84.0 662.1l3.5-3.5 3.5 3.5 M84.0 666.1l3.5 3.5 3.5-3.5" fill="none" stroke="#a8a8a8" stroke-width="1.1"/></svg>
<div class="a" style="left:97px;top:655px;width:66px;height:18px;overflow:hidden"><div class="t" style="left:3px;top:4.1px;font-size:12.5px;color:#e2e2e2">274.55 毫米</div></div>

<div class="a" style="left:191.0px;top:628.8px;width:86.5px;height:19.2px;background:#2f2f2f;border:1px solid #4a4a4a;border-radius:2px"></div>
<svg style="left:0;top:0" width="1280" height="720"><path d="M207.5 628.8v19.2" stroke="#4a4a4a"/><path d="M195.5 636.4l3.5-3.5 3.5 3.5 M195.5 640.4l3.5 3.5 3.5-3.5" fill="none" stroke="#a8a8a8" stroke-width="1.1"/></svg>
<div class="t" style="left:213.0px;top:633.4px;font-size:12.5px;color:#e2e2e2">184.6 毫米</div>
<div class="a" style="left:191.0px;top:654.5px;width:86.5px;height:19.2px;background:#2f2f2f;border:1px solid #4a4a4a;border-radius:2px"></div>
<svg style="left:0;top:0" width="1280" height="720"><path d="M207.5 654.5v19.2" stroke="#4a4a4a"/><path d="M195.5 662.1l3.5-3.5 3.5 3.5 M195.5 666.1l3.5 3.5 3.5-3.5" fill="none" stroke="#a8a8a8" stroke-width="1.1"/></svg>
<div class="t" style="left:213.0px;top:659.1px;font-size:12.5px;color:#e2e2e2">162.8 毫米</div>
<div class="t" style="left:63px;top:635.5px;font-size:12.5px;color:#d8d8d8">X:</div>
<div class="t" style="left:64px;top:661.5px;font-size:12.5px;color:#d8d8d8">Y:</div>
<div class="t" style="left:173px;top:635.5px;font-size:12.5px;color:#d8d8d8">W:</div>
<div class="t" style="left:176px;top:661.5px;font-size:12.5px;color:#d8d8d8">H:</div>
<div class="a" style="left:339.5px;top:628.2px;width:86.0px;height:19.8px;background:#2f2f2f;border:1px solid #4a4a4a;border-radius:2px"></div>
<svg style="left:0;top:0" width="1280" height="720"><path d="M356.0 628.2v19.8" stroke="#4a4a4a"/><path d="M344.0 636.1l3.5-3.5 3.5 3.5 M344.0 640.1l3.5 3.5 3.5-3.5" fill="none" stroke="#a8a8a8" stroke-width="1.1"/><path d="M408.0 628.2v19.8" stroke="#4a4a4a"/><path d="M412.5 636.6l4 3.5 4-3.5" fill="none" stroke="#a8a8a8" stroke-width="1.1"/></svg>
<div class="t" style="left:360.0px;top:633.1px;font-size:12.5px;color:#e2e2e2">100%</div>
<div class="a" style="left:339.5px;top:654.2px;width:86.0px;height:20.0px;background:#2f2f2f;border:1px solid #4a4a4a;border-radius:2px"></div>
<svg style="left:0;top:0" width="1280" height="720"><path d="M356.0 654.2v20.0" stroke="#4a4a4a"/><path d="M344.0 662.2l3.5-3.5 3.5 3.5 M344.0 666.2l3.5 3.5 3.5-3.5" fill="none" stroke="#a8a8a8" stroke-width="1.1"/><path d="M408.0 654.2v20.0" stroke="#4a4a4a"/><path d="M412.5 662.8l4 3.5 4-3.5" fill="none" stroke="#a8a8a8" stroke-width="1.1"/></svg>
<div class="t" style="left:360.0px;top:659.3px;font-size:12.5px;color:#e2e2e2">100%</div>
<div class="a" style="left:481.0px;top:628.0px;width:86.5px;height:20.0px;background:#2f2f2f;border:1px solid #4a4a4a;border-radius:2px"></div>
<svg style="left:0;top:0" width="1280" height="720"><path d="M497.5 628.0v20.0" stroke="#4a4a4a"/><path d="M485.5 636.0l3.5-3.5 3.5 3.5 M485.5 640.0l3.5 3.5 3.5-3.5" fill="none" stroke="#a8a8a8" stroke-width="1.1"/><path d="M550.0 628.0v20.0" stroke="#4a4a4a"/><path d="M554.5 636.5l4 3.5 4-3.5" fill="none" stroke="#a8a8a8" stroke-width="1.1"/></svg>
<div class="t" style="left:503.0px;top:633.0px;font-size:12.5px;color:#e2e2e2">0°</div>
<div class="a" style="left:481.0px;top:654.0px;width:86.5px;height:20.0px;background:#2f2f2f;border:1px solid #4a4a4a;border-radius:2px"></div>
<svg style="left:0;top:0" width="1280" height="720"><path d="M497.5 654.0v20.0" stroke="#4a4a4a"/><path d="M485.5 662.0l3.5-3.5 3.5 3.5 M485.5 666.0l3.5 3.5 3.5-3.5" fill="none" stroke="#a8a8a8" stroke-width="1.1"/><path d="M550.0 654.0v20.0" stroke="#4a4a4a"/><path d="M554.5 662.5l4 3.5 4-3.5" fill="none" stroke="#a8a8a8" stroke-width="1.1"/></svg>
<div class="t" style="left:503.0px;top:659.0px;font-size:12.5px;color:#e2e2e2">0°</div>
<div class="a" style="left:791.0px;top:628.0px;width:85.0px;height:20.0px;background:#2f2f2f;border:1px solid #4a4a4a;border-radius:2px"></div>
<svg style="left:0;top:0" width="1280" height="720"><path d="M807.5 628.0v20.0" stroke="#4a4a4a"/><path d="M795.5 636.0l3.5-3.5 3.5 3.5 M795.5 640.0l3.5 3.5 3.5-3.5" fill="none" stroke="#a8a8a8" stroke-width="1.1"/><path d="M858.5 628.0v20.0" stroke="#4a4a4a"/><path d="M863.0 636.5l4 3.5 4-3.5" fill="none" stroke="#a8a8a8" stroke-width="1.1"/></svg>
<div class="t" style="left:812.0px;top:633.0px;font-size:12.5px;color:#e2e2e2">0 毫米</div>
<div class="a" style="left:791px;top:654px;width:85px;height:20px;background:#2f2f2f;border:1px solid #4a4a4a;border-radius:2px"></div>
<div class="a" style="left:791px;top:654px;width:68px;height:20px;background:#d8d8d8;border-radius:2px 0 0 2px"></div>
<div class="a" style="left:796px;top:659px;width:59px;height:10px;background:#111"></div>
<svg style="left:0;top:0" width="1280" height="720"><path d="M863 662.5l4 3.5 4-3.5" fill="none" stroke="#a8a8a8" stroke-width="1.1"/></svg>
<div class="a" style="left:909.7px;top:628.8px;width:85.9px;height:19.2px;background:#2f2f2f;border:1px solid #4a4a4a;border-radius:2px"></div>
<svg style="left:0;top:0" width="1280" height="720"><path d="M926.2 628.8v19.2" stroke="#4a4a4a"/><path d="M914.2 636.4l3.5-3.5 3.5 3.5 M914.2 640.4l3.5 3.5 3.5-3.5" fill="none" stroke="#a8a8a8" stroke-width="1.1"/></svg>
<div class="t" style="left:931.6px;top:633.4px;font-size:12.5px;color:#e2e2e2">3</div>
<div class="a" style="left:909.7px;top:654.4px;width:85.9px;height:20.3px;background:#2f2f2f;border:1px solid #4a4a4a;border-radius:2px"></div>
<svg style="left:0;top:0" width="1280" height="720"><path d="M926.2 654.4v20.3" stroke="#4a4a4a"/><path d="M914.2 662.5l3.5-3.5 3.5 3.5 M914.2 666.5l3.5 3.5 3.5-3.5" fill="none" stroke="#a8a8a8" stroke-width="1.1"/></svg>
<div class="t" style="left:931.0px;top:659.5px;font-size:12.5px;color:#e2e2e2">4.233 毫米</div>
<svg style="left:0;top:0" width="1280" height="720">
<g fill="none" stroke="#a8a8a8" stroke-width="1.1">
<rect x="28.5" y="638.5" width="5" height="5"/>
<rect x="28.5" y="647.0" width="5" height="5"/>
<rect x="28.5" y="655.5" width="5" height="5"/>
<rect x="37.0" y="638.5" width="5" height="5"/>
<rect x="37.0" y="647.0" width="5" height="5"/>
<rect x="37.0" y="655.5" width="5" height="5"/>
<rect x="45.5" y="638.5" width="5" height="5"/>
<rect x="45.5" y="647.0" width="5" height="5"/>
<rect x="45.5" y="655.5" width="5" height="5"/>
<path d="M33.5 641h3.5 M42 641h3.5 M33.5 649.5h3.5 M42 649.5h3.5 M33.5 658h3.5 M42 658h3.5 M31 643.5v3.5 M39.5 643.5v3.5 M48 643.5v3.5 M31 652v3.5 M39.5 652v3.5 M48 652v3.5"/>
</g>
<rect x="37.5" y="655.5" width="5" height="5" fill="#bbb"/>
<g fill="#555"><rect x="4" y="640" width="1" height="1"/><rect x="4" y="643" width="1" height="1"/><rect x="4" y="646" width="1" height="1"/><rect x="4" y="649" width="1" height="1"/><rect x="4" y="652" width="1" height="1"/><rect x="4" y="655" width="1" height="1"/><rect x="4" y="658" width="1" height="1"/><rect x="4" y="661" width="1" height="1"/></g>
<path d="M291 645.5l3-3a2.5 2.5 0 0 1 3.5 3.5l-3 3 M301 655l-3 3a2.5 2.5 0 0 1-3.5-3.5l3-3 M292 643l10 14" fill="none" stroke="#a8a8a8" stroke-width="1.6"/>
<path d="M315.0 627v50" stroke="#2e2e2e"/>
<path d="M573.5 627v50" stroke="#2e2e2e"/>
<path d="M669 627v50" stroke="#2e2e2e"/>
<path d="M732.5 627v50" stroke="#2e2e2e"/>
<path d="M783.0 627v50" stroke="#2e2e2e"/>
<path d="M882.5 627v50" stroke="#2e2e2e"/>
<path d="M1002.0 627v50" stroke="#2e2e2e"/>
<path d="M1036.0 627v50" stroke="#2e2e2e"/>
<path d="M1098.5 627v50" stroke="#2e2e2e"/>
<path d="M1133.0 627v50" stroke="#2e2e2e"/>
<path d="M1251.5 627v50" stroke="#2e2e2e"/>
<path d="M304.5 627v50" stroke="#2e2e2e"/>
<path d="M320.5 632.5h13.5v13.5h-13.5z" fill="none" stroke="#b8b8b8" stroke-width="1.1" stroke-dasharray="1.5 1"/>
<path d="M323 639.5h8 M328 636.5l3 3-3 3" fill="none" stroke="#d0d0d0" stroke-width="1.4"/>
<path d="M320.5 657.5h13.5v13.5h-13.5z" fill="none" stroke="#b8b8b8" stroke-width="1.1" stroke-dasharray="1.5 1"/>
<path d="M327.5 659v9 M324.5 665l3 3 3-3" fill="none" stroke="#d0d0d0" stroke-width="1.4"/>
<rect x="432" y="640" width="22" height="22.5" fill="#2a2a2a"/>
<path d="M441 651l-1.5-2a2.2 2.2 0 0 1 3.5-2.5l2 2.5 M445 651l1.5 2a2.2 2.2 0 0 1-3.5 2.5l-2-2.5" fill="none" stroke="#c0c0c0" stroke-width="1.6"/>
<path d="M466 668h7l3-7h-7z" fill="#b8b8b8"/>
<path d="M582.5 656.5v12l6-6z" fill="none" stroke="#b8b8b8" stroke-width="1.2"/><path d="M599 656v13l-6.5-6.5z" fill="#b8b8b8"/><path d="M590.5 654v17" stroke="#b8b8b8" stroke-dasharray="1.5 1.2"/>
<path d="M610.5 655.5h14l-7 6z" fill="none" stroke="#b8b8b8" stroke-width="1.2"/><path d="M610 672.5h15l-7.5-6.5z" fill="#b8b8b8"/><path d="M609 664h17" stroke="#b8b8b8" stroke-dasharray="1.5 1.2"/>
<path d="M637.5 643v-4h4 M658.5 639h4v4 M662.5 660v4h-4 M641.5 664h-4v-4" fill="none" stroke="#c8c8c8" stroke-width="1.2"/>
<g fill="none" stroke="#8c8c8c" stroke-width="0.9"><rect x="686.0" y="635.0" width="3" height="3"/><path d="M687.5 638.0v2.5 M682.5 640.5h10 M682.5 640.5v2.5 M687.5 640.5v2.5 M692.5 640.5v2.5"/><rect x="681.0" y="643.0" width="3" height="3"/><rect x="686.0" y="643.0" width="3" height="3"/><rect x="691.0" y="643.0" width="3" height="3"/></g>
<g fill="none" stroke="#8c8c8c" stroke-width="0.9"><rect x="713.0" y="635.0" width="3" height="3"/><path d="M714.5 638.0v2.5 M709.5 640.5h10 M709.5 640.5v2.5 M714.5 640.5v2.5 M719.5 640.5v2.5"/><rect x="708.0" y="643.0" width="3" height="3"/><rect x="713.0" y="643.0" width="3" height="3"/><rect x="718.0" y="643.0" width="3" height="3"/></g>
<path d="M703 638l4-3v6z" fill="#888"/>
<g fill="none" stroke="#8c8c8c" stroke-width="0.9"><rect x="686.0" y="657.0" width="3" height="3"/><path d="M687.5 660.0v2.5 M682.5 662.5h10 M682.5 662.5v2.5 M687.5 662.5v2.5 M692.5 662.5v2.5"/><rect x="681.0" y="665.0" width="3" height="3"/><rect x="686.0" y="665.0" width="3" height="3"/><rect x="691.0" y="665.0" width="3" height="3"/></g>
<path d="M683 669h8l-4 3z" fill="#888"/>
<g fill="none" stroke="#8c8c8c" stroke-width="0.9"><rect x="710.0" y="658.0" width="3" height="3"/><path d="M711.5 661.0v2.5 M706.5 663.5h10 M706.5 663.5v2.5 M711.5 663.5v2.5 M716.5 663.5v2.5"/><rect x="705.0" y="666.0" width="3" height="3"/><rect x="710.0" y="666.0" width="3" height="3"/><rect x="715.0" y="666.0" width="3" height="3"/></g>
<path d="M720 658l4 4-4 4z" fill="#888"/>
<rect x="739" y="632.5" width="18.5" height="15" fill="#e8e8e8" stroke="#fff"/>
<path d="M740 647l17-14" stroke="#c01a36" stroke-width="2"/>
<rect x="739" y="655" width="18.5" height="18.5" fill="#eee"/><rect x="742.5" y="658.5" width="11.5" height="11.5" fill="#3a3a3a"/>
<path d="M740 673l17-17" stroke="#c01a36" stroke-width="2"/>
<rect x="762.5" y="632" width="16" height="16" rx="2" fill="none" stroke="#4a4a4a"/><rect x="762.5" y="655" width="16" height="18.5" rx="2" fill="none" stroke="#4a4a4a"/>
<path d="M768.5 636.5l3 3.5-3 3.5 M768.5 660.5l3 3.5-3 3.5" fill="none" stroke="#a8a8a8" stroke-width="1.1"/>
<path d="M889.5 632.5h14v13h-14z M894 632.5v13 M899 632.5v13" fill="none" stroke="#c0c0c0" stroke-width="1.1"/>
<path d="M889.5 657.5h14v13h-14z M895 657.5v13 M898 657.5v13 M893 664h4 M896 664h4" fill="none" stroke="#c0c0c0" stroke-width="1.1"/>
<rect x="1008" y="653.75" width="22" height="22" rx="2" fill="#2a2a2a"/>
<rect x="1043" y="626" width="21.5" height="22.75" rx="2" fill="#2a2a2a"/>
<path d="M1012.0 634.5h6 M1020.0 634.5h6 M1012.0 638.5h6 M1020.0 638.5h6 M1012.0 642.5h6 M1020.0 642.5h6 M1012.0 660.5h6 M1020.0 660.5h6 M1012.0 664.5h6 M1020.0 664.5h6 M1012.0 668.5h6 M1020.0 668.5h6 M1046 631.5h15 M1046 634h15 M1046 637h15 M1073 640.5h16 M1073 642.5h16 M1073 644.5h16 M1046 661.5h16 M1046 664h16 M1046 666.5h16 M1073 656.5h16 M1073 663.5h16 M1073 670.5h16" stroke="#c8c8c8" stroke-width="1"/>
<rect x="1109.5" y="630.5" width="14" height="14" fill="none" stroke="#b8b8b8" stroke-width="1.1"/><rect x="1110" y="631" width="6" height="6" fill="#b8b8b8"/><g fill="#ccc"><rect x="1108" y="629" width="3" height="3"/><rect x="1122" y="629" width="3" height="3"/><rect x="1108" y="643" width="3" height="3"/><rect x="1122" y="643" width="3" height="3"/></g><path d="M1118 637.5h3 M1116.5 643v-3" stroke="#ccc"/>
<path d="M1236 643l-5 9h4l-2 7 7-10h-4l2-6z" fill="#bdbdbd"/>
<circle cx="1266" cy="638" r="4.2" fill="#bdbdbd"/><circle cx="1266" cy="638" r="1.6" fill="#383838"/><path d="M1266 632v12 M1260 638h12 M1261.8 633.8l8.4 8.4 M1270.2 633.8l-8.4 8.4" stroke="#bdbdbd" stroke-width="2"/><circle cx="1266" cy="638" r="1.6" fill="#383838"/>
<path d="M1260 661h12 M1260 664.5h12 M1260 668h12" stroke="#bdbdbd" stroke-width="1.1"/>
<path d="M583 636a8 8 0 0 0 16 0 M609.5 636a8 8 0 0 0 16 0" fill="none" stroke="#9a9a9a" stroke-width="1.2" stroke-dasharray="1.5 1.2"/>
<path d="M465 642h11l-6-8" fill="none" stroke="#b8b8b8" stroke-width="1.2"/>
</svg>
<div class="t" style="left:644.5px;top:639px;font-family:'Liberation Serif',serif;font-size:21px;color:#dedede">P</div>
<div class="a" style="left:443px;top:641px;width:1px;height:1px"></div>
<div class="a" style="left:220px;top:681px;width:225px;height:35px;background:#393939"></div>
<div class="a" style="left:445px;top:681px;width:220px;height:35px;background:#30322f"></div>
<div class="a" style="left:665px;top:681px;width:223px;height:35px;background:#3a3534"></div>
<div class="a" style="left:888px;top:681px;width:392px;height:35px;background:#313131"></div>
<!-- paragraph panel -->
<div class="a" style="left:927px;top:92px;width:241px;height:405px;background:#3b3b3b"></div>

<!-- PARAGRAPH PANEL CONTENT -->
<div class="a" style="left:927px;top:92px;width:241px;height:13px;background:#2e2e2e"></div>
<div class="a" style="left:927px;top:105px;width:241px;height:21px;background:#323232"></div>
<div class="a" style="left:981px;top:105px;width:56px;height:21px;background:#3b3b3b"></div>
<div class="t" style="left:942px;top:110px;font-size:12.5px;color:#9c9c9c">字符</div>
<div class="t" style="left:999px;top:110px;font-size:12.5px;color:#e6e6e6">段落</div>
<svg style="left:0;top:0" width="1280" height="720">
<path d="M1146 96.5l-3 2.5 3 2.5z M1142 96.5l-3 2.5 3 2.5z" fill="#a0a0a0"/>
<path d="M1158 96.5l5 5 M1163 96.5l-5 5" stroke="#a0a0a0" stroke-width="1.5"/>
<path d="M989 113.5l2-2 2 2 M989 118.5l2 2 2-2" fill="none" stroke="#9a9a9a" stroke-width="1"/>
<path d="M1152 111.5h10 M1152 113.5h10 M1152 115.5h10 M1152 117.5h10 M1152 119.5h10" stroke="#9a9a9a" stroke-width="1"/>
<rect x="934" y="134" width="22" height="20" rx="2" fill="#2a2a2a"/>
<path d="M937.5 137.5h14.0 M937.5 140.0h10.0 M937.5 142.5h14.0 M937.5 145.0h10.0 M937.5 147.5h14.0 M937.5 150.0h10.0 M961.5 137.5h14.0 M963.5 140.0h10.0 M961.5 142.5h14.0 M963.5 145.0h10.0 M961.5 147.5h14.0 M963.5 150.0h10.0 M985.5 137.5h14.0 M989.5 140.0h10.0 M985.5 142.5h14.0 M989.5 145.0h10.0 M985.5 147.5h14.0 M989.5 150.0h10.0 M1017.0 137.5h14.0 M1017.0 140.0h14.0 M1017.0 142.5h14.0 M1017.0 145.0h14.0 M1017.0 147.5h14.0 M1017.0 150.0h10.0 M1041.0 137.5h14.0 M1041.0 140.0h14.0 M1041.0 142.5h14.0 M1041.0 145.0h14.0 M1041.0 147.5h14.0 M1043.0 150.0h10.0 M1065.0 137.5h14.0 M1065.0 140.0h14.0 M1065.0 142.5h14.0 M1065.0 145.0h14.0 M1065.0 147.5h14.0 M1069.0 150.0h10.0 M1089.0 137.5h14.0 M1089.0 140.0h14.0 M1089.0 142.5h14.0 M1089.0 145.0h14.0 M1089.0 147.5h14.0 M1089.0 150.0h14.0 M1119.0 137.5h10.0 M1121.0 140.0h8.0 M1119.0 142.5h10.0 M1121.0 145.0h8.0 M1119.0 147.5h10.0 M1121.0 150.0h8.0 M1131.5 136v15 M1143.0 137.5h10.0 M1143.0 140.0h8.0 M1143.0 142.5h10.0 M1143.0 145.0h8.0 M1143.0 147.5h10.0 M1143.0 150.0h8.0 M1155.5 136v15" stroke="#c8c8c8" stroke-width="1" fill="none"/>
<path d="M927 161.5h241" stroke="#2f2f2f"/>
<path d="M927 364.5h241 M927 437.5h241" stroke="#333"/>
</svg>
<div class="a" style="left:955.7px;top:167.6px;width:84.8px;height:19.4px;background:#303030;border:1px solid #4a4a4a;border-radius:2px"></div>
<svg style="left:0;top:0" width="1280" height="720"><path d="M973.2 167.6v19.4" stroke="#4a4a4a"/><path d="M960.7 175.3l3.5-3.5 3.5 3.5 M960.7 179.3l3.5 3.5 3.5-3.5" fill="none" stroke="#a8a8a8" stroke-width="1.1"/></svg>
<div class="t" style="left:977.0px;top:171.8px;font-size:12.5px;color:#e4e4e4">0 毫米</div>
<div class="a" style="left:1076.6px;top:167.6px;width:84.8px;height:19.4px;background:#303030;border:1px solid #4a4a4a;border-radius:2px"></div>
<svg style="left:0;top:0" width="1280" height="720"><path d="M1094.1 167.6v19.4" stroke="#4a4a4a"/><path d="M1081.6 175.3l3.5-3.5 3.5 3.5 M1081.6 179.3l3.5 3.5 3.5-3.5" fill="none" stroke="#a8a8a8" stroke-width="1.1"/></svg>
<div class="t" style="left:1097.0px;top:171.8px;font-size:12.5px;color:#e4e4e4">0 毫米</div>
<div class="a" style="left:955.7px;top:193.6px;width:84.8px;height:19.1px;background:#303030;border:1px solid #4a4a4a;border-radius:2px"></div>
<svg style="left:0;top:0" width="1280" height="720"><path d="M973.2 193.6v19.1" stroke="#4a4a4a"/><path d="M960.7 201.1l3.5-3.5 3.5 3.5 M960.7 205.1l3.5 3.5 3.5-3.5" fill="none" stroke="#a8a8a8" stroke-width="1.1"/></svg>
<div class="t" style="left:977.0px;top:197.6px;font-size:12.5px;color:#e4e4e4">0 毫米</div>
<div class="a" style="left:1076.6px;top:193.6px;width:84.8px;height:19.1px;background:#303030;border:1px solid #4a4a4a;border-radius:2px"></div>
<svg style="left:0;top:0" width="1280" height="720"><path d="M1094.1 193.6v19.1" stroke="#4a4a4a"/><path d="M1081.6 201.1l3.5-3.5 3.5 3.5 M1081.6 205.1l3.5 3.5 3.5-3.5" fill="none" stroke="#a8a8a8" stroke-width="1.1"/></svg>
<div class="t" style="left:1097.0px;top:197.6px;font-size:12.5px;color:#e4e4e4">0 毫米</div>
<div class="a" style="left:956.0px;top:219.6px;width:66.5px;height:19.8px;background:#303030;border:1px solid #4a4a4a;border-radius:2px"></div>
<svg style="left:0;top:0" width="1280" height="720"><path d="M1006.0 219.6v19.8" stroke="#4a4a4a"/><path d="M1010.0 228.0l4 3.5 4-3.5" fill="none" stroke="#a8a8a8" stroke-width="1.1"/></svg>
<div class="t" style="left:960.0px;top:224.0px;font-size:12.5px;color:#e4e4e4">自动</div>
<div class="t" style="left:1027px;top:223px;font-size:12.5px;color:#d4d4d4">行</div>
<div class="a" style="left:955.7px;top:251.3px;width:84.8px;height:19.9px;background:#303030;border:1px solid #4a4a4a;border-radius:2px"></div>
<svg style="left:0;top:0" width="1280" height="720"><path d="M973.2 251.3v19.9" stroke="#4a4a4a"/><path d="M960.7 259.2l3.5-3.5 3.5 3.5 M960.7 263.2l3.5 3.5 3.5-3.5" fill="none" stroke="#a8a8a8" stroke-width="1.1"/></svg>
<div class="t" style="left:977.0px;top:255.8px;font-size:12.5px;color:#e4e4e4">0 毫米</div>
<div class="a" style="left:1076.6px;top:251.3px;width:84.8px;height:19.9px;background:#303030;border:1px solid #4a4a4a;border-radius:2px"></div>
<svg style="left:0;top:0" width="1280" height="720"><path d="M1094.1 251.3v19.9" stroke="#4a4a4a"/><path d="M1081.6 259.2l3.5-3.5 3.5 3.5 M1081.6 263.2l3.5 3.5 3.5-3.5" fill="none" stroke="#a8a8a8" stroke-width="1.1"/></svg>
<div class="t" style="left:1097.0px;top:255.8px;font-size:12.5px;color:#e4e4e4">0 毫米</div>
<div class="a" style="left:955.7px;top:277.7px;width:84.8px;height:19.5px;background:#303030;border:1px solid #4a4a4a;border-radius:2px"></div>
<svg style="left:0;top:0" width="1280" height="720"><path d="M973.2 277.7v19.5" stroke="#4a4a4a"/><path d="M960.7 285.4l3.5-3.5 3.5 3.5 M960.7 289.4l3.5 3.5 3.5-3.5" fill="none" stroke="#555" stroke-width="1.1"/></svg>
<svg style="left:0;top:0" width="1280" height="720"><path d="M1024.0 277.7v19.5" stroke="#4a4a4a"/><path d="M1028.0 285.9l4 3.5 4-3.5" fill="none" stroke="#a8a8a8" stroke-width="1.1"/></svg>
<div class="t" style="left:977.0px;top:281.9px;font-size:12.5px;color:#e4e4e4">忽略</div>
<div class="a" style="left:954.8px;top:335.0px;width:87.1px;height:20.3px;background:#303030;border:1px solid #4a4a4a;border-radius:2px"></div>
<svg style="left:0;top:0" width="1280" height="720"><path d="M972.3 335.0v20.3" stroke="#4a4a4a"/><path d="M959.8 343.1l3.5-3.5 3.5 3.5 M959.8 347.1l3.5 3.5 3.5-3.5" fill="none" stroke="#a8a8a8" stroke-width="1.1"/></svg>
<div class="t" style="left:978.0px;top:339.6px;font-size:12.5px;color:#e4e4e4">0</div>
<div class="a" style="left:1076.4px;top:335.0px;width:86.6px;height:20.3px;background:#303030;border:1px solid #4a4a4a;border-radius:2px"></div>
<svg style="left:0;top:0" width="1280" height="720"><path d="M1093.9 335.0v20.3" stroke="#4a4a4a"/><path d="M1081.4 343.1l3.5-3.5 3.5 3.5 M1081.4 347.1l3.5 3.5 3.5-3.5" fill="none" stroke="#a8a8a8" stroke-width="1.1"/></svg>
<div class="t" style="left:1097.0px;top:339.6px;font-size:12.5px;color:#e4e4e4">0</div>
<svg style="left:0;top:0" width="1280" height="720"><g stroke="#c0c0c0" stroke-width="1" fill="none">
<path d="M934.0 177.0h6 M938.0 175.0l2 2-2 2 M942.5 171.0v12 M944.0 172.5h5 M944.0 175.5h5 M944.0 178.5h5 M944.0 181.5h5"/>
<path d="M1054 172.5h5 M1054 175.5h5 M1054 178.5h5 M1054 181.5h5 M1060.5 171v12 M1069 177h-6 M1065 175l-2 2 2 2"/>
<path d="M934 199h6 M938 197l2 2-2 2 M940.5 194.5h9 M940.5 197.5h9 M940.5 200.5h9 M940.5 203.5h9 M935.5 193v4"/>
<path d="M1054 196.5h9 M1054 199.5h9 M1054 202.5h9 M1054 205.5h9 M1069 209h-6 M1065 207l-2 2 2 2"/>
<path d="M936.5 221v18 M934.5 223l2-2 2 2 M934.5 237l2 2 2-2 M940 222.5h14 M940 237.5h14 M941.5 222v16 M945.5 222v4 M949.5 222v4 M945.5 234v4 M949.5 234v4"/>
<path d="M934 257h6 M938 255l2 2-2 2 M941.5 253h8v5h-8z M941.5 261.5h8 M941.5 264.5h8 M941.5 267.5h8"/>
<path d="M1054 266h6 M1058 264l2 2-2 2 M1061.5 253.5h8 M1061.5 256.5h8 M1061.5 259.5h8 M1061.5 263h8v5h-8z"/>
<path d="M934 288h6 M938 286l2 2-2 2 M941.5 280.5h8 M941.5 283.5h8v5h-8z M941.5 291.5h8"/>
<path d="M935 339v7 M933 341l2-2 2 2 M938 350.5h12 M938 353.5h12 M1056 350.5h13 M1056 353.5h13 M1066 340.5h3 M1066 343.5h3"/>
</g></svg>
<div class="t" style="left:938px;top:337px;font-size:10px;color:#c0c0c0">A</div>
<div class="t" style="left:1056px;top:337px;font-size:10px;color:#c0c0c0">A+</div>
<div class="a" style="left:934.5px;top:379px;width:10.5px;height:10px;border:1px solid #b0b0b0;border-radius:1px"></div>
<div class="t" style="left:952px;top:378px;font-size:12.5px;color:#dcdcdc">底纹</div>
<div class="a" style="left:934.5px;top:411.5px;width:10.5px;height:10px;border:1px solid #b0b0b0;border-radius:1px"></div>
<div class="t" style="left:952px;top:410px;font-size:12.5px;color:#dcdcdc">边框</div>
<div class="a" style="left:1074px;top:374px;width:89px;height:20px;background:#303030;border:1px solid #4a4a4a;border-radius:2px"></div>
<div class="a" style="left:1075px;top:375px;width:70px;height:18px;background:#d8d8d8"></div>
<div class="a" style="left:1078.5px;top:378.5px;width:11px;height:11px;background:#1d9ad6;border:1px solid #222"></div>
<div class="t" style="left:1095px;top:378px;font-size:12.5px;color:#1e1e1e">C=10...</div>
<div class="a" style="left:1074px;top:407px;width:89px;height:20px;background:#303030;border:1px solid #4a4a4a;border-radius:2px"></div>
<div class="a" style="left:1075px;top:408px;width:70px;height:18px;background:#d8d8d8"></div>
<div class="a" style="left:1078.5px;top:411.5px;width:11px;height:11px;background:#111"></div>
<div class="t" style="left:1095px;top:411px;font-size:12.5px;color:#1e1e1e">[黑色]</div>
<svg style="left:0;top:0" width="1280" height="720"><path d="M1149 382.5l4 3.5 4-3.5 M1149 415.5l4 3.5 4-3.5" fill="none" stroke="#a8a8a8" stroke-width="1.1"/><rect x="1056" y="376" width="16" height="16" fill="#9a9a9a"/><g fill="#5a5a5a"><rect x="1060" y="376" width="4" height="4"/><rect x="1068" y="376" width="4" height="4"/><rect x="1056" y="380" width="4" height="4"/><rect x="1064" y="380" width="4" height="4"/><rect x="1060" y="384" width="4" height="4"/><rect x="1068" y="384" width="4" height="4"/><rect x="1056" y="388" width="4" height="4"/><rect x="1064" y="388" width="4" height="4"/></g><path d="M1057 427v-15h15 M1061 427v-11h11 M1065 427v-7h7" fill="none" stroke="#b8b8b8" stroke-width="1.3"/></svg>
<div class="t" style="left:939px;top:449px;font-size:12px;color:#e0e0e0;width:80px;text-align:right">遮头尾设置:</div>
<div class="a" style="left:1025.0px;top:445.8px;width:138.0px;height:18.5px;background:#303030;border:1px solid #4a4a4a;border-radius:2px"></div>
<div class="t" style="left:1030.0px;top:449.9px;font-size:12px;color:#e4e4e4">简体中文遮头尾</div>
<div class="t" style="left:919px;top:475px;font-size:12px;color:#e0e0e0;width:100px;text-align:right">标点挤压设置:</div>
<div class="a" style="left:1025.0px;top:471.6px;width:138.0px;height:18.6px;background:#303030;border:1px solid #4a4a4a;border-radius:2px"></div>
<div class="t" style="left:1030.0px;top:475.7px;font-size:12px;color:#e4e4e4">简体中文默认值</div>
<svg style="left:0;top:0" width="1280" height="720"><path d="M1149 453.5l4 3.5 4-3.5 M1149 479.5l4 3.5 4-3.5" fill="none" stroke="#a8a8a8" stroke-width="1.1"/></svg>
<!-- dialog -->
<div class="a" style="left:415px;top:43px;width:450px;height:591px;background:#3c3c3c;border:1px solid #2a2a2a;border-bottom-color:#555"></div>
<div class="a" style="left:416px;top:43px;width:448px;height:30px;background:#e9e9e9;border-bottom:1px solid #f8f8f8"></div>

<!-- DIALOG CONTENT -->
<div class="t" style="left:424px;top:51px;font-size:12px;color:#1e1e1e">遮头尾规则集</div>
<div class="t" style="left:432px;top:95px;font-size:12px;color:#dedede">遮头尾设置(K):</div>
<div class="a" style="left:520px;top:90px;width:224px;height:21px;background:#333;border:1px solid #4e4e4e"></div>
<div class="t" style="left:524px;top:95px;font-size:12px;color:#e0e0e0">简体中文遮头尾</div>
<div class="t" style="left:432px;top:134px;font-size:12px;color:#dedede">字符(E):</div>
<div class="a" style="left:522px;top:128px;width:50px;height:21px;background:#eceef4;border:1.5px solid #6a9ee0;border-radius:2px"></div>
<div class="a" style="left:528px;top:132px;width:1px;height:13px;background:#111"></div>
<div class="a" style="left:577px;top:128px;width:97px;height:21px;background:#333;border:1px solid #4e4e4e"></div>
<div class="t" style="left:582px;top:133px;font-size:12px;color:#e0e0e0">字符输入</div>
<div class="a" style="left:680px;top:127px;width:64px;height:25px;border:2px solid #c6c6c6;border-radius:13px;color:#e2e2e2;font-size:12px;line-height:21px;text-align:center;padding-top:2px">添加(A)</div>
<div class="a" style="left:755px;top:89px;width:89px;height:25px;border:2px solid #c6c6c6;border-radius:13px;color:#e2e2e2;font-size:12px;line-height:21px;text-align:center;padding-top:2px">确定</div>
<div class="a" style="left:755px;top:125px;width:89px;height:25px;border:2px solid #c6c6c6;border-radius:13px;color:#e2e2e2;font-size:12px;line-height:21px;text-align:center;padding-top:2px">取消</div>
<div class="a" style="left:755px;top:161px;width:89px;height:25px;border:2px solid #c6c6c6;border-radius:13px;color:#e2e2e2;font-size:12px;line-height:21px;text-align:center;padding-top:2px">新建(N)...</div>
<div class="a" style="left:755px;top:197px;width:89px;height:26px;background:#414141;border-radius:13px;color:#5c5c5c;font-size:12px;line-height:26px;text-align:center">存储(S)</div>
<div class="a" style="left:755px;top:233px;width:89px;height:26px;background:#414141;border-radius:13px;color:#5c5c5c;font-size:12px;line-height:26px;text-align:center">删除集(D)</div>
<svg style="left:0;top:0" width="900" height="300"><g fill="none" stroke="#a8a8a8" stroke-width="1.2"><path d="M731 99l3.5 3 3.5-3 M658 137l3.5 3 3.5-3"/></g></svg>
<div class="t" style="left:432px;top:165px;font-size:12px;color:#dedede">禁止在行首的字符(B)</div>
<div class="t" style="left:432px;top:340px;font-size:12px;color:#dedede">禁止在行尾的字符(L)</div>
<div class="t" style="left:432px;top:435px;font-size:12px;color:#dedede">悬挂标点(H)</div>
<div class="t" style="left:432px;top:530px;font-size:12px;color:#dedede">禁止分开的字符(C)</div>
<div class="a" style="left:433.9px;top:187.8px;width:299.4px;height:139.3px;background:#d6d6d6"></div>
<svg style="left:0;top:0" width="900" height="700"><rect x="653.46" y="267.40" width="19.96" height="19.90" fill="#8d9ec0"/><path d="M433.90 187.80V327.10 M453.86 187.80V327.10 M473.82 187.80V327.10 M493.78 187.80V327.10 M513.74 187.80V327.10 M533.70 187.80V327.10 M553.66 187.80V327.10 M573.62 187.80V327.10 M593.58 187.80V327.10 M613.54 187.80V327.10 M633.50 187.80V327.10 M653.46 187.80V327.10 M673.42 187.80V327.10 M693.38 187.80V327.10 M713.34 187.80V327.10 M733.30 187.80V327.10 M433.90 187.80H733.30 M433.90 207.70H733.30 M433.90 227.60H733.30 M433.90 247.50H733.30 M433.90 267.40H733.30 M433.90 287.30H733.30 M433.90 307.20H733.30 M433.90 327.10H733.30" stroke="#262626" stroke-width="1.1" fill="none"/></svg>
<div class="t" style="left:433.9px;top:187.8px;width:20.0px;font-family:'Liberation Serif',serif;font-size:13px;color:#1a1a1a;text-align:left;padding-left:3px;line-height:19.9px">!</div>
<div class="t" style="left:453.9px;top:187.8px;width:20.0px;font-family:'Liberation Serif',serif;font-size:13px;color:#1a1a1a;text-align:left;padding-left:3px;line-height:19.9px">%</div>
<div class="t" style="left:473.8px;top:187.8px;width:20.0px;font-family:'Liberation Serif',serif;font-size:13px;color:#1a1a1a;text-align:center;line-height:19.9px">’</div>
<div class="t" style="left:493.8px;top:187.8px;width:20.0px;font-family:'Liberation Serif',serif;font-size:13px;color:#1a1a1a;text-align:left;padding-left:3px;line-height:19.9px">)</div>
<div class="t" style="left:513.7px;top:187.8px;width:20.0px;font-family:'Liberation Serif',serif;font-size:13px;color:#1a1a1a;text-align:left;padding-left:3px;line-height:19.9px">,</div>
<div class="t" style="left:533.7px;top:187.8px;width:20.0px;font-family:'Liberation Serif',serif;font-size:13px;color:#1a1a1a;text-align:left;padding-left:3px;line-height:19.9px">-</div>
<div class="t" style="left:553.7px;top:187.8px;width:20.0px;font-family:'Liberation Serif',serif;font-size:13px;color:#1a1a1a;text-align:left;padding-left:3px;line-height:19.9px">.</div>
<div class="t" style="left:573.6px;top:187.8px;width:20.0px;font-family:'Liberation Serif',serif;font-size:13px;color:#1a1a1a;text-align:left;padding-left:3px;line-height:19.9px">:</div>
<div class="t" style="left:593.6px;top:187.8px;width:20.0px;font-family:'Liberation Serif',serif;font-size:13px;color:#1a1a1a;text-align:left;padding-left:3px;line-height:19.9px">;</div>
<div class="t" style="left:613.5px;top:187.8px;width:20.0px;font-family:'Liberation Serif',serif;font-size:13px;color:#1a1a1a;text-align:left;padding-left:3px;line-height:19.9px">?</div>
<div class="t" style="left:633.5px;top:187.8px;width:20.0px;font-family:'Liberation Serif',serif;font-size:13px;color:#1a1a1a;text-align:left;padding-left:3px;line-height:19.9px">]</div>
<div class="t" style="left:653.5px;top:187.8px;width:20.0px;font-family:'Liberation Serif',serif;font-size:13px;color:#1a1a1a;text-align:left;padding-left:3px;line-height:19.9px">}</div>
<div class="t" style="left:673.4px;top:187.8px;width:20.0px;font-family:'Liberation Serif',serif;font-size:13px;color:#1a1a1a;text-align:center;line-height:19.9px">¨</div>
<div class="t" style="left:693.4px;top:187.8px;width:20.0px;font-family:'Liberation Serif',serif;font-size:13px;color:#1a1a1a;text-align:center;line-height:19.9px">°</div>
<div class="t" style="left:713.3px;top:187.8px;width:20.0px;font-family:'Liberation Serif',serif;font-size:13px;color:#1a1a1a;text-align:center;line-height:19.9px">·</div>
<div class="t" style="left:433.9px;top:207.7px;width:20.0px;font-family:'Liberation Serif',serif;font-size:13px;color:#1a1a1a;text-align:center;line-height:19.9px">ˇ</div>
<div class="t" style="left:453.9px;top:207.7px;width:20.0px;font-family:'Liberation Serif',serif;font-size:13px;color:#1a1a1a;text-align:center;line-height:19.9px">ˉ</div>
<div class="t" style="left:473.8px;top:207.7px;width:20.0px;font-family:'Liberation Serif',serif;font-size:13px;color:#1a1a1a;text-align:center;line-height:19.9px">‐</div>
<div class="t" style="left:493.8px;top:207.7px;width:20.0px;font-family:'Liberation Serif',serif;font-size:13px;color:#1a1a1a;text-align:center;line-height:19.9px">–</div>
<div class="t" style="left:513.7px;top:207.7px;width:20.0px;font-family:'Liberation Serif',serif;font-size:13px;color:#1a1a1a;text-align:center;line-height:19.9px">—</div>
<div class="t" style="left:533.7px;top:207.7px;width:20.0px;font-family:'Liberation Serif',serif;font-size:13px;color:#1a1a1a;text-align:center;line-height:19.9px">―</div>
<div class="t" style="left:553.7px;top:207.7px;width:20.0px;font-family:'Liberation Serif',serif;font-size:13px;color:#1a1a1a;text-align:center;line-height:19.9px">‖</div>
<div class="t" style="left:573.6px;top:207.7px;width:20.0px;font-family:'Liberation Serif',serif;font-size:13px;color:#1a1a1a;text-align:center;line-height:19.9px">’</div>
<div class="t" style="left:593.6px;top:207.7px;width:20.0px;font-family:'Liberation Serif',serif;font-size:13px;color:#1a1a1a;text-align:center;line-height:19.9px">”</div>
<div class="t" style="left:613.5px;top:207.7px;width:20.0px;font-family:'Liberation Serif',serif;font-size:13px;color:#1a1a1a;text-align:center;line-height:19.9px">‧</div>
<div class="t" style="left:633.5px;top:207.7px;width:20.0px;font-family:'Liberation Serif',serif;font-size:13px;color:#1a1a1a;text-align:center;line-height:19.9px">‥</div>
<div class="t" style="left:653.5px;top:207.7px;width:20.0px;font-family:'Liberation Serif',serif;font-size:13px;color:#1a1a1a;text-align:center;line-height:19.9px">…</div>
<div class="t" style="left:673.4px;top:207.7px;width:20.0px;font-family:'Liberation Serif',serif;font-size:13px;color:#1a1a1a;text-align:center;line-height:19.9px"><span style="font-size:7px;line-height:8px;display:inline-block">20<br>27</span></div>
<div class="t" style="left:693.4px;top:207.7px;width:20.0px;font-family:'Liberation Serif',serif;font-size:13px;color:#1a1a1a;text-align:center;line-height:19.9px">‰</div>
<div class="t" style="left:713.3px;top:207.7px;width:20.0px;font-family:'Liberation Serif',serif;font-size:13px;color:#1a1a1a;text-align:center;line-height:19.9px">′</div>
<div class="t" style="left:433.9px;top:227.6px;width:20.0px;font-family:'Liberation Serif',serif;font-size:13px;color:#1a1a1a;text-align:center;line-height:19.9px">″</div>
<div class="t" style="left:453.9px;top:227.6px;width:20.0px;font-family:'Liberation Serif',serif;font-size:13px;color:#1a1a1a;text-align:center;line-height:19.9px">℃</div>
<div class="t" style="left:473.8px;top:227.6px;width:20.0px;font-family:'Liberation Serif',serif;font-size:13px;color:#1a1a1a;text-align:center;line-height:19.9px">℉</div>
<div class="t" style="left:493.8px;top:227.6px;width:20.0px;font-family:'Liberation Serif',serif;font-size:13px;color:#1a1a1a;text-align:center;line-height:19.9px">∶</div>
<div class="t" style="left:513.7px;top:227.6px;width:20.0px;font-family:'Liberation Serif',serif;font-size:13px;color:#1a1a1a;text-align:center;line-height:19.9px">、</div>
<div class="t" style="left:533.7px;top:227.6px;width:20.0px;font-family:'Liberation Serif',serif;font-size:13px;color:#1a1a1a;text-align:center;line-height:19.9px">。</div>
<div class="t" style="left:553.7px;top:227.6px;width:20.0px;font-family:'Liberation Serif',serif;font-size:13px;color:#1a1a1a;text-align:center;line-height:19.9px">々</div>
<div class="t" style="left:573.6px;top:227.6px;width:20.0px;font-family:'Liberation Serif',serif;font-size:13px;color:#1a1a1a;text-align:center;line-height:19.9px">〉</div>
<div class="t" style="left:593.6px;top:227.6px;width:20.0px;font-family:'Liberation Serif',serif;font-size:13px;color:#1a1a1a;text-align:center;line-height:19.9px">》</div>
<div class="t" style="left:613.5px;top:227.6px;width:20.0px;font-family:'Liberation Serif',serif;font-size:13px;color:#1a1a1a;text-align:center;line-height:19.9px">」</div>
<div class="t" style="left:633.5px;top:227.6px;width:20.0px;font-family:'Liberation Serif',serif;font-size:13px;color:#1a1a1a;text-align:center;line-height:19.9px">』</div>
<div class="t" style="left:653.5px;top:227.6px;width:20.0px;font-family:'Liberation Serif',serif;font-size:13px;color:#1a1a1a;text-align:center;line-height:19.9px">】</div>
<div class="t" style="left:673.4px;top:227.6px;width:20.0px;font-family:'Liberation Serif',serif;font-size:13px;color:#1a1a1a;text-align:center;line-height:19.9px">〕</div>
<div class="t" style="left:693.4px;top:227.6px;width:20.0px;font-family:'Liberation Serif',serif;font-size:13px;color:#1a1a1a;text-align:center;line-height:19.9px">〗</div>
<div class="t" style="left:713.3px;top:227.6px;width:20.0px;font-family:'Liberation Serif',serif;font-size:13px;color:#1a1a1a;text-align:center;line-height:19.9px">：</div>
<div class="t" style="left:433.9px;top:247.5px;width:20.0px;font-family:'Liberation Serif',serif;font-size:13px;color:#1a1a1a;text-align:center;line-height:19.9px">︱</div>
<div class="t" style="left:453.9px;top:247.5px;width:20.0px;font-family:'Liberation Serif',serif;font-size:13px;color:#1a1a1a;text-align:center;line-height:19.9px">︶</div>
<div class="t" style="left:473.8px;top:247.5px;width:20.0px;font-family:'Liberation Serif',serif;font-size:13px;color:#1a1a1a;text-align:center;line-height:19.9px">︸</div>
<div class="t" style="left:493.8px;top:247.5px;width:20.0px;font-family:'Liberation Serif',serif;font-size:13px;color:#1a1a1a;text-align:center;line-height:19.9px">︺</div>
<div class="t" style="left:513.7px;top:247.5px;width:20.0px;font-family:'Liberation Serif',serif;font-size:13px;color:#1a1a1a;text-align:center;line-height:19.9px">︼</div>
<div class="t" style="left:533.7px;top:247.5px;width:20.0px;font-family:'Liberation Serif',serif;font-size:13px;color:#1a1a1a;text-align:center;line-height:19.9px">︾</div>
<div class="t" style="left:553.7px;top:247.5px;width:20.0px;font-family:'Liberation Serif',serif;font-size:13px;color:#1a1a1a;text-align:center;line-height:19.9px">﹀</div>
<div class="t" style="left:573.6px;top:247.5px;width:20.0px;font-family:'Liberation Serif',serif;font-size:13px;color:#1a1a1a;text-align:center;line-height:19.9px">﹂</div>
<div class="t" style="left:593.6px;top:247.5px;width:20.0px;font-family:'Liberation Serif',serif;font-size:13px;color:#1a1a1a;text-align:center;line-height:19.9px">﹄</div>
<div class="t" style="left:613.5px;top:247.5px;width:20.0px;font-family:'Liberation Serif',serif;font-size:13px;color:#1a1a1a;text-align:center;line-height:19.9px">﹏</div>
<div class="t" style="left:633.5px;top:247.5px;width:20.0px;font-family:'Liberation Serif',serif;font-size:13px;color:#1a1a1a;text-align:center;line-height:19.9px">！</div>
<div class="t" style="left:653.5px;top:247.5px;width:20.0px;font-family:'Liberation Serif',serif;font-size:13px;color:#1a1a1a;text-align:center;line-height:19.9px">＂</div>
<div class="t" style="left:673.4px;top:247.5px;width:20.0px;font-family:'Liberation Serif',serif;font-size:13px;color:#1a1a1a;text-align:center;line-height:19.9px">％</div>
<div class="t" style="left:693.4px;top:247.5px;width:20.0px;font-family:'Liberation Serif',serif;font-size:13px;color:#1a1a1a;text-align:center;line-height:19.9px">＇</div>
<div class="t" style="left:713.3px;top:247.5px;width:20.0px;font-family:'Liberation Serif',serif;font-size:13px;color:#1a1a1a;text-align:center;line-height:19.9px">）</div>
<div class="t" style="left:433.9px;top:267.4px;width:20.0px;font-family:'Liberation Serif',serif;font-size:13px;color:#1a1a1a;text-align:center;line-height:19.9px">，</div>
<div class="t" style="left:453.9px;top:267.4px;width:20.0px;font-family:'Liberation Serif',serif;font-size:13px;color:#1a1a1a;text-align:center;line-height:19.9px">－</div>
<div class="t" style="left:473.8px;top:267.4px;width:20.0px;font-family:'Liberation Serif',serif;font-size:13px;color:#1a1a1a;text-align:center;line-height:19.9px">：</div>
<div class="t" style="left:493.8px;top:267.4px;width:20.0px;font-family:'Liberation Serif',serif;font-size:13px;color:#1a1a1a;text-align:center;line-height:19.9px">；</div>
<div class="t" style="left:513.7px;top:267.4px;width:20.0px;font-family:'Liberation Serif',serif;font-size:13px;color:#1a1a1a;text-align:center;line-height:19.9px">？</div>
<div class="t" style="left:533.7px;top:267.4px;width:20.0px;font-family:'Liberation Serif',serif;font-size:13px;color:#1a1a1a;text-align:center;line-height:19.9px">］</div>
<div class="t" style="left:553.7px;top:267.4px;width:20.0px;font-family:'Liberation Serif',serif;font-size:13px;color:#1a1a1a;text-align:center;line-height:19.9px">｀</div>
<div class="t" style="left:573.6px;top:267.4px;width:20.0px;font-family:'Liberation Serif',serif;font-size:13px;color:#1a1a1a;text-align:center;line-height:19.9px">｜</div>
<div class="t" style="left:593.6px;top:267.4px;width:20.0px;font-family:'Liberation Serif',serif;font-size:13px;color:#1a1a1a;text-align:center;line-height:19.9px">｝</div>
<div class="t" style="left:613.5px;top:267.4px;width:20.0px;font-family:'Liberation Serif',serif;font-size:13px;color:#1a1a1a;text-align:center;line-height:19.9px">～</div>
<div class="t" style="left:633.5px;top:267.4px;width:20.0px;font-family:'Liberation Serif',serif;font-size:13px;color:#1a1a1a;text-align:center;line-height:19.9px">￠</div>
<div class="a" style="left:433.9px;top:362.8px;width:299.4px;height:59.7px;background:#d6d6d6"></div>
<svg style="left:0;top:0" width="900" height="700"><path d="M433.90 362.80V422.50 M453.86 362.80V422.50 M473.82 362.80V422.50 M493.78 362.80V422.50 M513.74 362.80V422.50 M533.70 362.80V422.50 M553.66 362.80V422.50 M573.62 362.80V422.50 M593.58 362.80V422.50 M613.54 362.80V422.50 M633.50 362.80V422.50 M653.46 362.80V422.50 M673.42 362.80V422.50 M693.38 362.80V422.50 M713.34 362.80V422.50 M733.30 362.80V422.50 M433.90 362.80H733.30 M433.90 382.70H733.30 M433.90 402.60H733.30 M433.90 422.50H733.30" stroke="#262626" stroke-width="1.1" fill="none"/></svg>
<div class="t" style="left:433.9px;top:362.8px;width:20.0px;font-family:'Liberation Serif',serif;font-size:13px;color:#1a1a1a;text-align:left;padding-left:3px;line-height:19.9px">$</div>
<div class="t" style="left:453.9px;top:362.8px;width:20.0px;font-family:'Liberation Serif',serif;font-size:13px;color:#1a1a1a;text-align:left;padding-left:3px;line-height:19.9px">(</div>
<div class="t" style="left:473.8px;top:362.8px;width:20.0px;font-family:'Liberation Serif',serif;font-size:13px;color:#1a1a1a;text-align:left;padding-left:3px;line-height:19.9px">[</div>
<div class="t" style="left:493.8px;top:362.8px;width:20.0px;font-family:'Liberation Serif',serif;font-size:13px;color:#1a1a1a;text-align:left;padding-left:3px;line-height:19.9px">\</div>
<div class="t" style="left:513.7px;top:362.8px;width:20.0px;font-family:'Liberation Serif',serif;font-size:13px;color:#1a1a1a;text-align:left;padding-left:3px;line-height:19.9px">{</div>
<div class="t" style="left:533.7px;top:362.8px;width:20.0px;font-family:'Liberation Serif',serif;font-size:13px;color:#1a1a1a;text-align:center;line-height:19.9px">£</div>
<div class="t" style="left:553.7px;top:362.8px;width:20.0px;font-family:'Liberation Serif',serif;font-size:13px;color:#1a1a1a;text-align:center;line-height:19.9px">¥</div>
<div class="t" style="left:573.6px;top:362.8px;width:20.0px;font-family:'Liberation Serif',serif;font-size:13px;color:#1a1a1a;text-align:center;line-height:19.9px">§</div>
<div class="t" style="left:593.6px;top:362.8px;width:20.0px;font-family:'Liberation Serif',serif;font-size:13px;color:#1a1a1a;text-align:center;line-height:19.9px">·</div>
<div class="t" style="left:613.5px;top:362.8px;width:20.0px;font-family:'Liberation Serif',serif;font-size:13px;color:#1a1a1a;text-align:center;line-height:19.9px">‘</div>
<div class="t" style="left:633.5px;top:362.8px;width:20.0px;font-family:'Liberation Serif',serif;font-size:13px;color:#1a1a1a;text-align:center;line-height:19.9px">“</div>
<div class="t" style="left:653.5px;top:362.8px;width:20.0px;font-family:'Liberation Serif',serif;font-size:13px;color:#1a1a1a;text-align:center;line-height:19.9px">‵</div>
<div class="t" style="left:673.4px;top:362.8px;width:20.0px;font-family:'Liberation Serif',serif;font-size:13px;color:#1a1a1a;text-align:center;line-height:19.9px">€</div>
<div class="t" style="left:693.4px;top:362.8px;width:20.0px;font-family:'Liberation Serif',serif;font-size:13px;color:#1a1a1a;text-align:center;line-height:19.9px">〈</div>
<div class="t" style="left:713.3px;top:362.8px;width:20.0px;font-family:'Liberation Serif',serif;font-size:13px;color:#1a1a1a;text-align:center;line-height:19.9px">《</div>
<div class="t" style="left:433.9px;top:382.7px;width:20.0px;font-family:'Liberation Serif',serif;font-size:13px;color:#1a1a1a;text-align:center;line-height:19.9px">「</div>
<div class="t" style="left:453.9px;top:382.7px;width:20.0px;font-family:'Liberation Serif',serif;font-size:13px;color:#1a1a1a;text-align:center;line-height:19.9px">『</div>
<div class="t" style="left:473.8px;top:382.7px;width:20.0px;font-family:'Liberation Serif',serif;font-size:13px;color:#1a1a1a;text-align:center;line-height:19.9px">【</div>
<div class="t" style="left:493.8px;top:382.7px;width:20.0px;font-family:'Liberation Serif',serif;font-size:13px;color:#1a1a1a;text-align:center;line-height:19.9px">〒</div>
<div class="t" style="left:513.7px;top:382.7px;width:20.0px;font-family:'Liberation Serif',serif;font-size:13px;color:#1a1a1a;text-align:center;line-height:19.9px">〖</div>
<div class="t" style="left:533.7px;top:382.7px;width:20.0px;font-family:'Liberation Serif',serif;font-size:13px;color:#1a1a1a;text-align:center;line-height:19.9px">︵</div>
<div class="t" style="left:553.7px;top:382.7px;width:20.0px;font-family:'Liberation Serif',serif;font-size:13px;color:#1a1a1a;text-align:center;line-height:19.9px">︷</div>
<div class="t" style="left:573.6px;top:382.7px;width:20.0px;font-family:'Liberation Serif',serif;font-size:13px;color:#1a1a1a;text-align:center;line-height:19.9px">︹</div>
<div class="t" style="left:593.6px;top:382.7px;width:20.0px;font-family:'Liberation Serif',serif;font-size:13px;color:#1a1a1a;text-align:center;line-height:19.9px">︻</div>
<div class="t" style="left:613.5px;top:382.7px;width:20.0px;font-family:'Liberation Serif',serif;font-size:13px;color:#1a1a1a;text-align:center;line-height:19.9px">︽</div>
<div class="t" style="left:633.5px;top:382.7px;width:20.0px;font-family:'Liberation Serif',serif;font-size:13px;color:#1a1a1a;text-align:center;line-height:19.9px">︿</div>
<div class="t" style="left:653.5px;top:382.7px;width:20.0px;font-family:'Liberation Serif',serif;font-size:13px;color:#1a1a1a;text-align:center;line-height:19.9px">﹁</div>
<div class="t" style="left:673.4px;top:382.7px;width:20.0px;font-family:'Liberation Serif',serif;font-size:13px;color:#1a1a1a;text-align:center;line-height:19.9px">﹃</div>
<div class="t" style="left:693.4px;top:382.7px;width:20.0px;font-family:'Liberation Serif',serif;font-size:13px;color:#1a1a1a;text-align:center;line-height:19.9px">＃</div>
<div class="t" style="left:713.3px;top:382.7px;width:20.0px;font-family:'Liberation Serif',serif;font-size:13px;color:#1a1a1a;text-align:center;line-height:19.9px">＄</div>
<div class="t" style="left:433.9px;top:402.6px;width:20.0px;font-family:'Liberation Serif',serif;font-size:13px;color:#1a1a1a;text-align:center;line-height:19.9px">＠</div>
<div class="t" style="left:453.9px;top:402.6px;width:20.0px;font-family:'Liberation Serif',serif;font-size:13px;color:#1a1a1a;text-align:center;line-height:19.9px">＃</div>
<div class="t" style="left:473.8px;top:402.6px;width:20.0px;font-family:'Liberation Serif',serif;font-size:13px;color:#1a1a1a;text-align:center;line-height:19.9px">＄</div>
<div class="t" style="left:493.8px;top:402.6px;width:20.0px;font-family:'Liberation Serif',serif;font-size:13px;color:#1a1a1a;text-align:center;line-height:19.9px">（</div>
<div class="t" style="left:513.7px;top:402.6px;width:20.0px;font-family:'Liberation Serif',serif;font-size:13px;color:#1a1a1a;text-align:center;line-height:19.9px">＜</div>
<div class="t" style="left:533.7px;top:402.6px;width:20.0px;font-family:'Liberation Serif',serif;font-size:13px;color:#1a1a1a;text-align:center;line-height:19.9px">＠</div>
<div class="t" style="left:553.7px;top:402.6px;width:20.0px;font-family:'Liberation Serif',serif;font-size:13px;color:#1a1a1a;text-align:center;line-height:19.9px">［</div>
<div class="t" style="left:573.6px;top:402.6px;width:20.0px;font-family:'Liberation Serif',serif;font-size:13px;color:#1a1a1a;text-align:center;line-height:19.9px">｛</div>
<div class="t" style="left:593.6px;top:402.6px;width:20.0px;font-family:'Liberation Serif',serif;font-size:13px;color:#1a1a1a;text-align:center;line-height:19.9px">～</div>
<div class="t" style="left:613.5px;top:402.6px;width:20.0px;font-family:'Liberation Serif',serif;font-size:13px;color:#1a1a1a;text-align:center;line-height:19.9px">￡</div>
<div class="t" style="left:633.5px;top:402.6px;width:20.0px;font-family:'Liberation Serif',serif;font-size:13px;color:#1a1a1a;text-align:center;line-height:19.9px">￥</div>
<div class="a" style="left:433.9px;top:457.8px;width:299.4px;height:59.7px;background:#d6d6d6"></div>
<svg style="left:0;top:0" width="900" height="700"><path d="M433.90 457.80V517.50 M453.86 457.80V517.50 M473.82 457.80V517.50 M493.78 457.80V517.50 M513.74 457.80V517.50 M533.70 457.80V517.50 M553.66 457.80V517.50 M573.62 457.80V517.50 M593.58 457.80V517.50 M613.54 457.80V517.50 M633.50 457.80V517.50 M653.46 457.80V517.50 M673.42 457.80V517.50 M693.38 457.80V517.50 M713.34 457.80V517.50 M733.30 457.80V517.50 M433.90 457.80H733.30 M433.90 477.70H733.30 M433.90 497.60H733.30 M433.90 517.50H733.30" stroke="#262626" stroke-width="1.1" fill="none"/></svg>
<div class="t" style="left:433.9px;top:457.8px;width:20.0px;font-family:'Liberation Serif',serif;font-size:13px;color:#1a1a1a;text-align:center;line-height:19.9px">、</div>
<div class="t" style="left:453.9px;top:457.8px;width:20.0px;font-family:'Liberation Serif',serif;font-size:13px;color:#1a1a1a;text-align:center;line-height:19.9px">。</div>
<div class="t" style="left:473.8px;top:457.8px;width:20.0px;font-family:'Liberation Serif',serif;font-size:13px;color:#1a1a1a;text-align:center;line-height:19.9px">，</div>
<div class="a" style="left:433.9px;top:552.7px;width:299.4px;height:59.7px;background:#d6d6d6"></div>
<svg style="left:0;top:0" width="900" height="700"><path d="M433.90 552.70V612.40 M453.86 552.70V612.40 M473.82 552.70V612.40 M493.78 552.70V612.40 M513.74 552.70V612.40 M533.70 552.70V612.40 M553.66 552.70V612.40 M573.62 552.70V612.40 M593.58 552.70V612.40 M613.54 552.70V612.40 M633.50 552.70V612.40 M653.46 552.70V612.40 M673.42 552.70V612.40 M693.38 552.70V612.40 M713.34 552.70V612.40 M733.30 552.70V612.40 M433.90 552.70H733.30 M433.90 572.60H733.30 M433.90 592.50H733.30 M433.90 612.40H733.30" stroke="#262626" stroke-width="1.1" fill="none"/></svg>
<div class="t" style="left:433.9px;top:552.7px;width:20.0px;font-family:'Liberation Serif',serif;font-size:13px;color:#1a1a1a;text-align:center;line-height:19.9px">—</div>
<div class="t" style="left:453.9px;top:552.7px;width:20.0px;font-family:'Liberation Serif',serif;font-size:13px;color:#1a1a1a;text-align:center;line-height:19.9px">‥</div>
<div class="t" style="left:473.8px;top:552.7px;width:20.0px;font-family:'Liberation Serif',serif;font-size:13px;color:#1a1a1a;text-align:center;line-height:19.9px">…</div>
<div class="a" style="left:737px;top:188px;width:11px;height:139px;background:#363636"></div>
<div class="a" style="left:738px;top:199px;width:9px;height:25px;background:#505050;border-radius:4px"></div>
<svg style="left:0;top:0" width="900" height="400"><path d="M739 193l3.5-3 3.5 3 M739 320l3.5 3 3.5-3" fill="none" stroke="#6a6a6a" stroke-width="1"/></svg>
</body></html>
